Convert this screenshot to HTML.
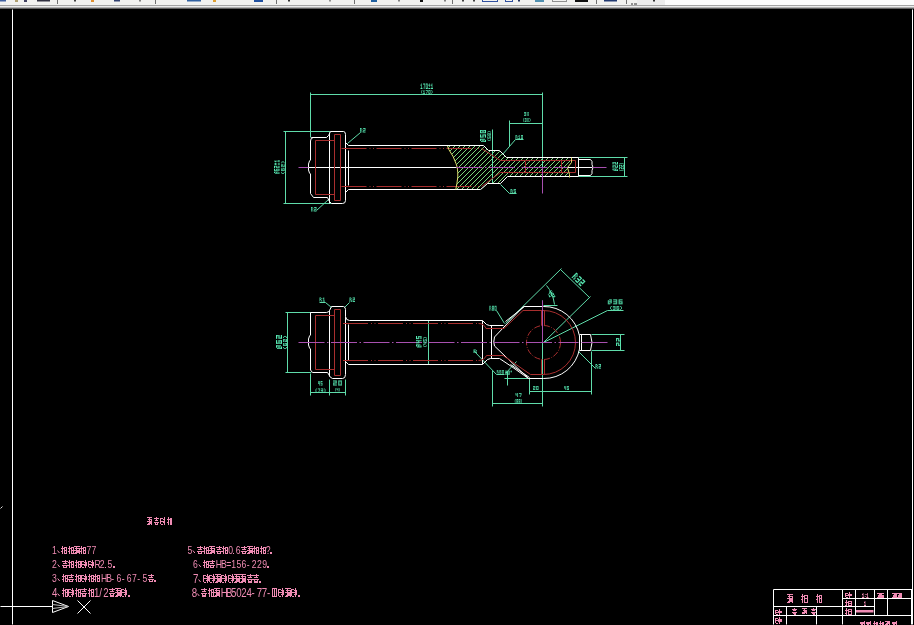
<!DOCTYPE html>
<html><head><meta charset="utf-8"><style>
html,body{margin:0;padding:0;background:#000;width:914px;height:625px;overflow:hidden}
svg{position:absolute;left:0;top:0;display:block;will-change:transform}
text{font-family:"Liberation Sans",sans-serif}
</style></head><body>
<svg width="914" height="625" viewBox="0 0 914 625">
<rect x="0" y="0" width="914" height="625" fill="#000"/>
<line x1="12.5" y1="9.5" x2="12.5" y2="624.5" stroke="#ffffff" stroke-width="1" />
<line x1="912.5" y1="9.5" x2="912.5" y2="624.5" stroke="#ffffff" stroke-width="1" />
<line x1="0.5" y1="606.5" x2="52.5" y2="606.5" stroke="#ffffff" stroke-width="1" />
<polygon points="52.5,600.5 68.5,606.5 52.5,612.5" fill="none" stroke="#ffffff" stroke-width="1" />
<line x1="52.5" y1="604.5" x2="68.5" y2="606.5" stroke="#bbbbbb" stroke-width="1" />
<line x1="52.5" y1="608.5" x2="68.5" y2="606.5" stroke="#bbbbbb" stroke-width="1" />
<line x1="77.5" y1="600.5" x2="90.5" y2="613.5" stroke="#ffffff" stroke-width="1" />
<line x1="90.5" y1="600.5" x2="77.5" y2="613.5" stroke="#ffffff" stroke-width="1" />
<line x1="0.5" y1="508.5" x2="2.5" y2="506.5" stroke="#dddddd" stroke-width="1" />
<defs><clipPath id="hclip"><path d="M447.5,146 L483.5,146 L488.5,151 L499.5,151 L506.5,158 L571.5,158 L571.5,162.5 L567.8,167.5 L569.8,174.5 L570,177 L507.5,177 L500.5,184 L487.5,184 L480.5,190 L455.5,190 Q458.5,178 457.5,167 Q454,156 447.5,146 Z"/></clipPath></defs>
<g clip-path="url(#hclip)" stroke="#7cd87c" stroke-width="1" shape-rendering="crispEdges"><line x1="385.5" y1="195.5" x2="440.5" y2="140.5"/><line x1="390.5" y1="195.5" x2="445.5" y2="140.5"/><line x1="395.5" y1="195.5" x2="450.5" y2="140.5"/><line x1="400.5" y1="195.5" x2="455.5" y2="140.5"/><line x1="405.5" y1="195.5" x2="460.5" y2="140.5"/><line x1="410.5" y1="195.5" x2="465.5" y2="140.5"/><line x1="415.5" y1="195.5" x2="470.5" y2="140.5"/><line x1="420.5" y1="195.5" x2="475.5" y2="140.5"/><line x1="425.5" y1="195.5" x2="480.5" y2="140.5"/><line x1="430.5" y1="195.5" x2="485.5" y2="140.5"/><line x1="435.5" y1="195.5" x2="490.5" y2="140.5"/><line x1="440.5" y1="195.5" x2="495.5" y2="140.5"/><line x1="445.5" y1="195.5" x2="500.5" y2="140.5"/><line x1="450.5" y1="195.5" x2="505.5" y2="140.5"/><line x1="455.5" y1="195.5" x2="510.5" y2="140.5"/><line x1="460.5" y1="195.5" x2="515.5" y2="140.5"/><line x1="465.5" y1="195.5" x2="520.5" y2="140.5"/><line x1="470.5" y1="195.5" x2="525.5" y2="140.5"/><line x1="475.5" y1="195.5" x2="530.5" y2="140.5"/><line x1="480.5" y1="195.5" x2="535.5" y2="140.5"/><line x1="485.5" y1="195.5" x2="540.5" y2="140.5"/><line x1="490.5" y1="195.5" x2="545.5" y2="140.5"/><line x1="495.5" y1="195.5" x2="550.5" y2="140.5"/><line x1="500.5" y1="195.5" x2="555.5" y2="140.5"/><line x1="505.5" y1="195.5" x2="560.5" y2="140.5"/><line x1="510.5" y1="195.5" x2="565.5" y2="140.5"/><line x1="515.5" y1="195.5" x2="570.5" y2="140.5"/><line x1="520.5" y1="195.5" x2="575.5" y2="140.5"/><line x1="525.5" y1="195.5" x2="580.5" y2="140.5"/><line x1="530.5" y1="195.5" x2="585.5" y2="140.5"/><line x1="535.5" y1="195.5" x2="590.5" y2="140.5"/><line x1="540.5" y1="195.5" x2="595.5" y2="140.5"/><line x1="545.5" y1="195.5" x2="600.5" y2="140.5"/><line x1="550.5" y1="195.5" x2="605.5" y2="140.5"/><line x1="555.5" y1="195.5" x2="610.5" y2="140.5"/><line x1="560.5" y1="195.5" x2="615.5" y2="140.5"/><line x1="565.5" y1="195.5" x2="620.5" y2="140.5"/><line x1="570.5" y1="195.5" x2="625.5" y2="140.5"/><line x1="575.5" y1="195.5" x2="630.5" y2="140.5"/></g>
<line x1="310.5" y1="94.5" x2="542.5" y2="94.5" stroke="#5fdcaa" stroke-width="1" />
<line x1="310.5" y1="92.5" x2="310.5" y2="137.5" stroke="#5fdcaa" stroke-width="1" />
<line x1="542.5" y1="92.5" x2="542.5" y2="167.5" stroke="#5fdcaa" stroke-width="1" />
<line x1="283.5" y1="131.5" x2="330.5" y2="131.5" stroke="#5fdcaa" stroke-width="1" />
<line x1="283.5" y1="203.5" x2="331.5" y2="203.5" stroke="#5fdcaa" stroke-width="1" />
<line x1="285.5" y1="131.5" x2="285.5" y2="203.5" stroke="#5fdcaa" stroke-width="1" />
<line x1="492.5" y1="129.5" x2="492.5" y2="183.5" stroke="#5fdcaa" stroke-width="1" />
<line x1="509.5" y1="123.5" x2="542.5" y2="123.5" stroke="#5fdcaa" stroke-width="1" />
<line x1="509.5" y1="120.5" x2="509.5" y2="146.5" stroke="#5fdcaa" stroke-width="1" />
<line x1="578.5" y1="157.5" x2="627.5" y2="157.5" stroke="#5fdcaa" stroke-width="1" />
<line x1="578.5" y1="176.5" x2="627.5" y2="176.5" stroke="#5fdcaa" stroke-width="1" />
<line x1="624.5" y1="157.5" x2="624.5" y2="176.5" stroke="#5fdcaa" stroke-width="1" />
<line x1="347.5" y1="143.5" x2="360.5" y2="132.5" stroke="#5fdcaa" stroke-width="1" />
<g transform="translate(360.00,128.00) scale(0.786,0.900)" fill="#58eab4"><rect x="0" y="0" width="2" height="1"/><rect x="0" y="1" width="1" height="1"/><rect x="2" y="1" width="1" height="1"/><rect x="0" y="2" width="2" height="1"/><rect x="0" y="3" width="1" height="1"/><rect x="2" y="3" width="1" height="1"/><rect x="0" y="4" width="1" height="1"/><rect x="2" y="4" width="1" height="1"/><rect x="4" y="0" width="3" height="1"/><rect x="6" y="1" width="1" height="1"/><rect x="4" y="2" width="3" height="1"/><rect x="4" y="3" width="1" height="1"/><rect x="4" y="4" width="3" height="1"/></g>
<line x1="328.5" y1="199.5" x2="316.5" y2="210.5" stroke="#5fdcaa" stroke-width="1" />
<g transform="translate(311.00,207.00) scale(0.786,0.900)" fill="#58eab4"><rect x="0" y="0" width="2" height="1"/><rect x="0" y="1" width="1" height="1"/><rect x="2" y="1" width="1" height="1"/><rect x="0" y="2" width="2" height="1"/><rect x="0" y="3" width="1" height="1"/><rect x="2" y="3" width="1" height="1"/><rect x="0" y="4" width="1" height="1"/><rect x="2" y="4" width="1" height="1"/><rect x="4" y="0" width="3" height="1"/><rect x="6" y="1" width="1" height="1"/><rect x="4" y="2" width="3" height="1"/><rect x="4" y="3" width="1" height="1"/><rect x="4" y="4" width="3" height="1"/></g>
<line x1="502.5" y1="154.5" x2="515.5" y2="139.5" stroke="#5fdcaa" stroke-width="1" />
<line x1="515.5" y1="139.5" x2="523.5" y2="139.5" stroke="#5fdcaa" stroke-width="1" />
<g transform="translate(515.50,135.00) scale(0.682,0.800)" fill="#58eab4"><rect x="0" y="0" width="2" height="1"/><rect x="0" y="1" width="1" height="1"/><rect x="2" y="1" width="1" height="1"/><rect x="0" y="2" width="2" height="1"/><rect x="0" y="3" width="1" height="1"/><rect x="2" y="3" width="1" height="1"/><rect x="0" y="4" width="1" height="1"/><rect x="2" y="4" width="1" height="1"/><rect x="5" y="0" width="1" height="1"/><rect x="4" y="1" width="2" height="1"/><rect x="5" y="2" width="1" height="1"/><rect x="5" y="3" width="1" height="1"/><rect x="4" y="4" width="3" height="1"/><rect x="8" y="0" width="3" height="1"/><rect x="8" y="1" width="1" height="1"/><rect x="10" y="1" width="1" height="1"/><rect x="8" y="2" width="1" height="1"/><rect x="10" y="2" width="1" height="1"/><rect x="8" y="3" width="1" height="1"/><rect x="10" y="3" width="1" height="1"/><rect x="8" y="4" width="3" height="1"/></g>
<line x1="500.5" y1="184.5" x2="509.5" y2="193.5" stroke="#5fdcaa" stroke-width="1" />
<line x1="509.5" y1="193.5" x2="516.5" y2="193.5" stroke="#5fdcaa" stroke-width="1" />
<g transform="translate(510.50,189.00) scale(0.786,0.800)" fill="#58eab4"><rect x="0" y="0" width="2" height="1"/><rect x="0" y="1" width="1" height="1"/><rect x="2" y="1" width="1" height="1"/><rect x="0" y="2" width="2" height="1"/><rect x="0" y="3" width="1" height="1"/><rect x="2" y="3" width="1" height="1"/><rect x="0" y="4" width="1" height="1"/><rect x="2" y="4" width="1" height="1"/><rect x="4" y="0" width="3" height="1"/><rect x="4" y="1" width="1" height="1"/><rect x="4" y="2" width="3" height="1"/><rect x="6" y="3" width="1" height="1"/><rect x="4" y="4" width="3" height="1"/></g>
<path d="M311.5,137.5 L326.5,137.5 Q329,136 330.5,131.5 L343.5,131.5 Q345.5,131.5 345.5,134.5 L345.5,200.5 Q345.5,203.5 342.5,203.5 L331.5,203.5 Q329,202 327.5,197.5 L313.5,197.5 L310.5,193.5 L310.5,174 L309.5,173 L308.5,170 L308.5,164 L309.5,161 L310.5,160 L310.5,141 Q310.5,137.5 313.5,137.5 Z" fill="none" stroke="#ffffff" stroke-width="1" />
<line x1="329.5" y1="132.5" x2="329.5" y2="203.5" stroke="#ffffff" stroke-width="1" />
<polyline points="345.5,142.5 348.5,145.5 483.5,145.5 488.5,150.5 499.5,150.5 506.5,157.5 578.5,157.5" fill="none" stroke="#ffffff" stroke-width="1" />
<polyline points="345.5,192.5 348.5,189.5 480.5,189.5 487.5,183.5 500.5,183.5 507.5,176.5 578.5,176.5" fill="none" stroke="#ffffff" stroke-width="1" />
<line x1="348.5" y1="150.5" x2="348.5" y2="185.5" stroke="#ffffff" stroke-width="1" />
<line x1="308.5" y1="167.5" x2="456.5" y2="167.5" stroke="#ffffff" stroke-width="1" />
<line x1="567.5" y1="167.5" x2="592.5" y2="167.5" stroke="#ffffff" stroke-width="1" />
<path d="M578.5,157.5 L578.5,176.5 M578.5,159.5 L590.5,159.5 L592,161.5 L592,164.5 L593,167.5 L592,170.5 L592,173.5 L590.5,175.5 L578.5,175.5" fill="none" stroke="#ffffff" stroke-width="1" />
<polyline points="334.5,140.5 315.5,140.5 315.5,194.5 334.5,194.5" fill="none" stroke="#a82e2e" stroke-width="1" />
<polygon points="334.5,134.5 340.5,134.5 340.5,200.5 334.5,200.5" fill="none" stroke="#a82e2e" stroke-width="1" />
<line x1="341.5" y1="148.5" x2="481.5" y2="148.5" stroke="#a82e2e" stroke-width="1" stroke-dasharray="25 3 1 2.5 1 2.5"/>
<line x1="341.5" y1="186.5" x2="481.5" y2="186.5" stroke="#a82e2e" stroke-width="1" stroke-dasharray="25 3 1 2.5 1 2.5"/>
<polyline points="481.5,148.5 500.5,160.5 575.5,160.5 575.5,172.5 500.5,172.5 481.5,186.5" fill="none" stroke="#a82e2e" stroke-width="1" />
<line x1="561.5" y1="160.5" x2="561.5" y2="172.5" stroke="#a82e2e" stroke-width="1" />
<line x1="525.5" y1="161.5" x2="525.5" y2="172.5" stroke="#a82e2e" stroke-width="1" />
<path d="M447.5,146 L448.8,149.5 Q454,157 456,163.5 Q458,168 457.8,177 Q457,184 455.8,189.5" fill="none" stroke="#e0e070" stroke-width="1" />
<polyline points="571.5,157.5 571.5,162.5 567.5,167.5 569.5,174.5 569.5,177.5" fill="none" stroke="#e0e070" stroke-width="1" />
<line x1="298.5" y1="167.5" x2="308.5" y2="167.5" stroke="#a850b0" stroke-width="1" />
<line x1="456.5" y1="167.5" x2="567.5" y2="167.5" stroke="#a850b0" stroke-width="1" stroke-dasharray="26 2.5 1.5 2.5"/>
<line x1="592.5" y1="167.5" x2="606.5" y2="167.5" stroke="#a850b0" stroke-width="1" />
<line x1="542.5" y1="167.5" x2="542.5" y2="193.5" stroke="#a850b0" stroke-width="1" />
<g transform="translate(420.50,83.50) scale(0.658,1.100)" fill="#58eab4"><rect x="1" y="0" width="1" height="1"/><rect x="0" y="1" width="2" height="1"/><rect x="1" y="2" width="1" height="1"/><rect x="1" y="3" width="1" height="1"/><rect x="0" y="4" width="3" height="1"/><rect x="4" y="0" width="3" height="1"/><rect x="6" y="1" width="1" height="1"/><rect x="6" y="2" width="1" height="1"/><rect x="5" y="3" width="1" height="1"/><rect x="5" y="4" width="1" height="1"/><rect x="8" y="0" width="3" height="1"/><rect x="8" y="1" width="1" height="1"/><rect x="10" y="1" width="1" height="1"/><rect x="8" y="2" width="1" height="1"/><rect x="10" y="2" width="1" height="1"/><rect x="8" y="3" width="1" height="1"/><rect x="10" y="3" width="1" height="1"/><rect x="8" y="4" width="3" height="1"/><rect x="13" y="0" width="1" height="1"/><rect x="12" y="1" width="3" height="1"/><rect x="13" y="2" width="1" height="1"/><rect x="12" y="4" width="3" height="1"/><rect x="17" y="0" width="1" height="1"/><rect x="16" y="1" width="2" height="1"/><rect x="17" y="2" width="1" height="1"/><rect x="17" y="3" width="1" height="1"/><rect x="16" y="4" width="3" height="1"/></g>
<g transform="translate(421.00,90.00) scale(0.676,0.760)" fill="#58eab4"><rect x="1" y="0" width="1" height="1"/><rect x="0" y="1" width="1" height="1"/><rect x="0" y="2" width="1" height="1"/><rect x="0" y="3" width="1" height="1"/><rect x="1" y="4" width="1" height="1"/><rect x="4" y="0" width="1" height="1"/><rect x="3" y="1" width="2" height="1"/><rect x="4" y="2" width="1" height="1"/><rect x="4" y="3" width="1" height="1"/><rect x="3" y="4" width="3" height="1"/><rect x="7" y="0" width="3" height="1"/><rect x="9" y="1" width="1" height="1"/><rect x="9" y="2" width="1" height="1"/><rect x="8" y="3" width="1" height="1"/><rect x="8" y="4" width="1" height="1"/><rect x="11" y="0" width="3" height="1"/><rect x="11" y="1" width="1" height="1"/><rect x="13" y="1" width="1" height="1"/><rect x="11" y="2" width="1" height="1"/><rect x="13" y="2" width="1" height="1"/><rect x="11" y="3" width="1" height="1"/><rect x="13" y="3" width="1" height="1"/><rect x="11" y="4" width="3" height="1"/><rect x="15" y="0" width="1" height="1"/><rect x="16" y="1" width="1" height="1"/><rect x="16" y="2" width="1" height="1"/><rect x="16" y="3" width="1" height="1"/><rect x="15" y="4" width="1" height="1"/></g>
<g transform="translate(274.00,173.80) rotate(-90) scale(0.726,1.100)" fill="#58eab4"><rect x="1" y="0" width="2" height="1"/><rect x="0" y="1" width="1" height="1"/><rect x="2" y="1" width="1" height="1"/><rect x="0" y="2" width="3" height="1"/><rect x="0" y="3" width="1" height="1"/><rect x="2" y="3" width="1" height="1"/><rect x="0" y="4" width="2" height="1"/><rect x="4" y="0" width="3" height="1"/><rect x="4" y="1" width="1" height="1"/><rect x="4" y="2" width="3" height="1"/><rect x="4" y="3" width="1" height="1"/><rect x="6" y="3" width="1" height="1"/><rect x="4" y="4" width="3" height="1"/><rect x="8" y="0" width="3" height="1"/><rect x="10" y="1" width="1" height="1"/><rect x="8" y="2" width="3" height="1"/><rect x="8" y="3" width="1" height="1"/><rect x="8" y="4" width="3" height="1"/><rect x="13" y="0" width="1" height="1"/><rect x="12" y="1" width="3" height="1"/><rect x="13" y="2" width="1" height="1"/><rect x="12" y="4" width="3" height="1"/><rect x="17" y="0" width="1" height="1"/><rect x="16" y="1" width="2" height="1"/><rect x="17" y="2" width="1" height="1"/><rect x="17" y="3" width="1" height="1"/><rect x="16" y="4" width="3" height="1"/></g>
<g transform="translate(281.00,174.00) rotate(-90) scale(0.969,0.720)" fill="#58eab4"><rect x="1" y="0" width="1" height="1"/><rect x="0" y="1" width="1" height="1"/><rect x="0" y="2" width="1" height="1"/><rect x="0" y="3" width="1" height="1"/><rect x="1" y="4" width="1" height="1"/><rect x="3" y="0" width="3" height="1"/><rect x="3" y="1" width="1" height="1"/><rect x="3" y="2" width="3" height="1"/><rect x="3" y="3" width="1" height="1"/><rect x="5" y="3" width="1" height="1"/><rect x="3" y="4" width="3" height="1"/><rect x="7" y="0" width="3" height="1"/><rect x="9" y="1" width="1" height="1"/><rect x="7" y="2" width="3" height="1"/><rect x="7" y="3" width="1" height="1"/><rect x="7" y="4" width="3" height="1"/><rect x="11" y="0" width="1" height="1"/><rect x="12" y="1" width="1" height="1"/><rect x="12" y="2" width="1" height="1"/><rect x="12" y="3" width="1" height="1"/><rect x="11" y="4" width="1" height="1"/></g>
<g transform="translate(480.00,142.00) rotate(-90) scale(1.091,1.200)" fill="#58eab4"><rect x="1" y="0" width="2" height="1"/><rect x="0" y="1" width="1" height="1"/><rect x="2" y="1" width="1" height="1"/><rect x="0" y="2" width="3" height="1"/><rect x="0" y="3" width="1" height="1"/><rect x="2" y="3" width="1" height="1"/><rect x="0" y="4" width="2" height="1"/><rect x="4" y="0" width="3" height="1"/><rect x="4" y="1" width="1" height="1"/><rect x="4" y="2" width="3" height="1"/><rect x="6" y="3" width="1" height="1"/><rect x="4" y="4" width="3" height="1"/><rect x="8" y="0" width="3" height="1"/><rect x="8" y="1" width="1" height="1"/><rect x="10" y="1" width="1" height="1"/><rect x="8" y="2" width="3" height="1"/><rect x="8" y="3" width="1" height="1"/><rect x="10" y="3" width="1" height="1"/><rect x="8" y="4" width="3" height="1"/></g>
<g transform="translate(487.40,141.00) rotate(-90) scale(0.769,0.720)" fill="#58eab4"><rect x="1" y="0" width="1" height="1"/><rect x="0" y="1" width="1" height="1"/><rect x="0" y="2" width="1" height="1"/><rect x="0" y="3" width="1" height="1"/><rect x="1" y="4" width="1" height="1"/><rect x="3" y="0" width="3" height="1"/><rect x="3" y="1" width="1" height="1"/><rect x="3" y="2" width="3" height="1"/><rect x="5" y="3" width="1" height="1"/><rect x="3" y="4" width="3" height="1"/><rect x="7" y="0" width="3" height="1"/><rect x="7" y="1" width="1" height="1"/><rect x="9" y="1" width="1" height="1"/><rect x="7" y="2" width="3" height="1"/><rect x="7" y="3" width="1" height="1"/><rect x="9" y="3" width="1" height="1"/><rect x="7" y="4" width="3" height="1"/><rect x="11" y="0" width="1" height="1"/><rect x="12" y="1" width="1" height="1"/><rect x="12" y="2" width="1" height="1"/><rect x="12" y="3" width="1" height="1"/><rect x="11" y="4" width="1" height="1"/></g>
<g transform="translate(524.00,112.00) scale(0.714,0.760)" fill="#58eab4"><rect x="0" y="0" width="3" height="1"/><rect x="2" y="1" width="1" height="1"/><rect x="0" y="2" width="3" height="1"/><rect x="2" y="3" width="1" height="1"/><rect x="0" y="4" width="3" height="1"/><rect x="4" y="0" width="1" height="1"/><rect x="6" y="0" width="1" height="1"/><rect x="4" y="1" width="1" height="1"/><rect x="6" y="1" width="1" height="1"/><rect x="5" y="2" width="1" height="1"/><rect x="4" y="3" width="1" height="1"/><rect x="6" y="3" width="1" height="1"/><rect x="4" y="4" width="1" height="1"/><rect x="6" y="4" width="1" height="1"/></g>
<g transform="translate(523.00,118.00) scale(0.577,0.800)" fill="#58eab4"><rect x="1" y="0" width="1" height="1"/><rect x="0" y="1" width="1" height="1"/><rect x="0" y="2" width="1" height="1"/><rect x="0" y="3" width="1" height="1"/><rect x="1" y="4" width="1" height="1"/><rect x="3" y="0" width="3" height="1"/><rect x="5" y="1" width="1" height="1"/><rect x="3" y="2" width="3" height="1"/><rect x="5" y="3" width="1" height="1"/><rect x="3" y="4" width="3" height="1"/><rect x="7" y="0" width="1" height="1"/><rect x="9" y="0" width="1" height="1"/><rect x="7" y="1" width="1" height="1"/><rect x="9" y="1" width="1" height="1"/><rect x="8" y="2" width="1" height="1"/><rect x="7" y="3" width="1" height="1"/><rect x="9" y="3" width="1" height="1"/><rect x="7" y="4" width="1" height="1"/><rect x="9" y="4" width="1" height="1"/><rect x="11" y="0" width="1" height="1"/><rect x="12" y="1" width="1" height="1"/><rect x="12" y="2" width="1" height="1"/><rect x="12" y="3" width="1" height="1"/><rect x="11" y="4" width="1" height="1"/></g>
<g transform="translate(612.50,171.00) rotate(-90) scale(0.818,1.100)" fill="#58eab4"><rect x="1" y="0" width="2" height="1"/><rect x="0" y="1" width="1" height="1"/><rect x="2" y="1" width="1" height="1"/><rect x="0" y="2" width="3" height="1"/><rect x="0" y="3" width="1" height="1"/><rect x="2" y="3" width="1" height="1"/><rect x="0" y="4" width="2" height="1"/><rect x="4" y="0" width="3" height="1"/><rect x="6" y="1" width="1" height="1"/><rect x="4" y="2" width="3" height="1"/><rect x="4" y="3" width="1" height="1"/><rect x="4" y="4" width="3" height="1"/><rect x="8" y="0" width="3" height="1"/><rect x="10" y="1" width="1" height="1"/><rect x="8" y="2" width="3" height="1"/><rect x="8" y="3" width="1" height="1"/><rect x="8" y="4" width="3" height="1"/></g>
<g transform="translate(619.00,171.00) rotate(-90) scale(0.615,0.960)" fill="#58eab4"><rect x="1" y="0" width="1" height="1"/><rect x="0" y="1" width="1" height="1"/><rect x="0" y="2" width="1" height="1"/><rect x="0" y="3" width="1" height="1"/><rect x="1" y="4" width="1" height="1"/><rect x="3" y="0" width="3" height="1"/><rect x="5" y="1" width="1" height="1"/><rect x="3" y="2" width="3" height="1"/><rect x="3" y="3" width="1" height="1"/><rect x="3" y="4" width="3" height="1"/><rect x="7" y="0" width="3" height="1"/><rect x="9" y="1" width="1" height="1"/><rect x="7" y="2" width="3" height="1"/><rect x="7" y="3" width="1" height="1"/><rect x="7" y="4" width="3" height="1"/><rect x="11" y="0" width="1" height="1"/><rect x="12" y="1" width="1" height="1"/><rect x="12" y="2" width="1" height="1"/><rect x="12" y="3" width="1" height="1"/><rect x="11" y="4" width="1" height="1"/></g>
<line x1="285.5" y1="312.5" x2="315.5" y2="312.5" stroke="#5fdcaa" stroke-width="1" />
<line x1="285.5" y1="372.5" x2="311.5" y2="372.5" stroke="#5fdcaa" stroke-width="1" />
<line x1="287.5" y1="312.5" x2="287.5" y2="372.5" stroke="#5fdcaa" stroke-width="1" />
<line x1="310.5" y1="373.5" x2="310.5" y2="395.5" stroke="#5fdcaa" stroke-width="1" />
<line x1="329.5" y1="379.5" x2="329.5" y2="395.5" stroke="#5fdcaa" stroke-width="1" />
<line x1="345.5" y1="379.5" x2="345.5" y2="395.5" stroke="#5fdcaa" stroke-width="1" />
<line x1="310.5" y1="392.5" x2="345.5" y2="392.5" stroke="#5fdcaa" stroke-width="1" />
<line x1="428.5" y1="320.5" x2="428.5" y2="364.5" stroke="#5fdcaa" stroke-width="1" />
<line x1="331.5" y1="307.5" x2="325.5" y2="302.5" stroke="#5fdcaa" stroke-width="1" />
<line x1="319.5" y1="302.5" x2="325.5" y2="302.5" stroke="#5fdcaa" stroke-width="1" />
<line x1="344.5" y1="307.5" x2="349.5" y2="302.5" stroke="#5fdcaa" stroke-width="1" />
<line x1="505.5" y1="323.5" x2="561.5" y2="268.5" stroke="#5fdcaa" stroke-width="1" />
<line x1="560.5" y1="269.5" x2="589.5" y2="297.5" stroke="#5fdcaa" stroke-width="1" />
<line x1="590.5" y1="296.5" x2="543.5" y2="342.5" stroke="#5fdcaa" stroke-width="1" />
<path d="M546.5,285.5 Q553,293 554.5,304.5" fill="none" stroke="#5fdcaa" stroke-width="1" />
<line x1="543.5" y1="305.5" x2="557.5" y2="305.5" stroke="#5fdcaa" stroke-width="1" />
<line x1="543.5" y1="342.5" x2="607.5" y2="310.5" stroke="#5fdcaa" stroke-width="1" />
<line x1="607.5" y1="310.5" x2="623.5" y2="310.5" stroke="#5fdcaa" stroke-width="1" />
<line x1="542.5" y1="300.5" x2="542.5" y2="406.5" stroke="#5fdcaa" stroke-width="1" />
<line x1="591.5" y1="334.5" x2="624.5" y2="334.5" stroke="#5fdcaa" stroke-width="1" />
<line x1="591.5" y1="350.5" x2="624.5" y2="350.5" stroke="#5fdcaa" stroke-width="1" />
<line x1="620.5" y1="334.5" x2="620.5" y2="350.5" stroke="#5fdcaa" stroke-width="1" />
<line x1="591.5" y1="351.5" x2="591.5" y2="394.5" stroke="#5fdcaa" stroke-width="1" />
<line x1="578.5" y1="351.5" x2="595.5" y2="368.5" stroke="#5fdcaa" stroke-width="1" />
<line x1="577.5" y1="350.5" x2="592.5" y2="367.5" stroke="#5fdcaa" stroke-width="1" opacity="0"/>
<line x1="529.5" y1="378.5" x2="529.5" y2="394.5" stroke="#5fdcaa" stroke-width="1" />
<line x1="529.5" y1="391.5" x2="591.5" y2="391.5" stroke="#5fdcaa" stroke-width="1" />
<line x1="492.5" y1="370.5" x2="492.5" y2="406.5" stroke="#5fdcaa" stroke-width="1" />
<line x1="492.5" y1="403.5" x2="542.5" y2="403.5" stroke="#5fdcaa" stroke-width="1" />
<g transform="translate(514.80,399.00) scale(0.554,0.900)" fill="#58eab4"><rect x="1" y="0" width="1" height="1"/><rect x="0" y="1" width="1" height="1"/><rect x="0" y="2" width="1" height="1"/><rect x="0" y="3" width="1" height="1"/><rect x="1" y="4" width="1" height="1"/><rect x="3" y="0" width="3" height="1"/><rect x="3" y="1" width="1" height="1"/><rect x="5" y="1" width="1" height="1"/><rect x="3" y="2" width="3" height="1"/><rect x="3" y="3" width="1" height="1"/><rect x="5" y="3" width="1" height="1"/><rect x="3" y="4" width="3" height="1"/><rect x="7" y="0" width="3" height="1"/><rect x="7" y="1" width="1" height="1"/><rect x="9" y="1" width="1" height="1"/><rect x="7" y="2" width="3" height="1"/><rect x="7" y="3" width="1" height="1"/><rect x="9" y="3" width="1" height="1"/><rect x="7" y="4" width="3" height="1"/><rect x="11" y="0" width="1" height="1"/><rect x="12" y="1" width="1" height="1"/><rect x="12" y="2" width="1" height="1"/><rect x="12" y="3" width="1" height="1"/><rect x="11" y="4" width="1" height="1"/></g>
<line x1="504.5" y1="378.5" x2="529.5" y2="378.5" stroke="#5fdcaa" stroke-width="1" />
<line x1="507.5" y1="371.5" x2="507.5" y2="385.5" stroke="#5fdcaa" stroke-width="1" />
<line x1="516.5" y1="361.5" x2="505.5" y2="373.5" stroke="#5fdcaa" stroke-width="1" />
<line x1="474.5" y1="351.5" x2="496.5" y2="374.5" stroke="#5fdcaa" stroke-width="1" />
<line x1="496.5" y1="374.5" x2="504.5" y2="374.5" stroke="#5fdcaa" stroke-width="1" />
<g transform="translate(473.50,349.50) scale(1.167,0.700)" fill="#58eab4"><rect x="0" y="0" width="2" height="1"/><rect x="0" y="1" width="1" height="1"/><rect x="2" y="1" width="1" height="1"/><rect x="0" y="2" width="2" height="1"/><rect x="0" y="3" width="1" height="1"/><rect x="2" y="3" width="1" height="1"/><rect x="0" y="4" width="1" height="1"/><rect x="2" y="4" width="1" height="1"/></g>
<line x1="496.5" y1="310.5" x2="504.5" y2="323.5" stroke="#5fdcaa" stroke-width="1" />
<g transform="translate(489.40,305.80) scale(0.645,0.960)" fill="#58eab4"><rect x="0" y="0" width="2" height="1"/><rect x="0" y="1" width="1" height="1"/><rect x="2" y="1" width="1" height="1"/><rect x="0" y="2" width="2" height="1"/><rect x="0" y="3" width="1" height="1"/><rect x="2" y="3" width="1" height="1"/><rect x="0" y="4" width="1" height="1"/><rect x="2" y="4" width="1" height="1"/><rect x="4" y="0" width="3" height="1"/><rect x="4" y="1" width="1" height="1"/><rect x="6" y="1" width="1" height="1"/><rect x="4" y="2" width="3" height="1"/><rect x="4" y="3" width="1" height="1"/><rect x="6" y="3" width="1" height="1"/><rect x="4" y="4" width="3" height="1"/><rect x="8" y="0" width="3" height="1"/><rect x="8" y="1" width="1" height="1"/><rect x="10" y="1" width="1" height="1"/><rect x="8" y="2" width="1" height="1"/><rect x="10" y="2" width="1" height="1"/><rect x="8" y="3" width="1" height="1"/><rect x="10" y="3" width="1" height="1"/><rect x="8" y="4" width="3" height="1"/></g>
<line x1="474.5" y1="352.5" x2="494.5" y2="372.5" stroke="#5fdcaa" stroke-width="1" opacity="0"/>
<path d="M310.5,312.5 L326.5,312.5 Q329,312 329.5,310.5 L331.5,306.5 L343.5,306.5 Q345.5,307 345.5,309.5 L345.5,316.5 Q346,320.5 349.5,320.5" fill="none" stroke="#ffffff" stroke-width="1" />
<path d="M345.5,316.5 L345.5,374.5 Q345.5,378.5 342.5,378.5 L332.5,378.5 Q330,378 328.5,374 L327.5,372.5 L312.5,372.5 L310.5,370 L310.5,349 L309.5,348 L308.5,345 L308.5,339 L309.5,336 L310.5,335 L310.5,312.5" fill="none" stroke="#ffffff" stroke-width="1" />
<line x1="329.5" y1="310.5" x2="329.5" y2="376.5" stroke="#ffffff" stroke-width="1" />
<line x1="348.5" y1="324.5" x2="348.5" y2="360.5" stroke="#ffffff" stroke-width="1" />
<polyline points="345.5,361.5 348.5,364.5 482.5,364.5" fill="none" stroke="#ffffff" stroke-width="1" />
<line x1="349.5" y1="320.5" x2="482.5" y2="320.5" stroke="#ffffff" stroke-width="1" />
<polyline points="482.5,320.5 486.5,324.5 489.5,325.5 503.5,325.5" fill="none" stroke="#ffffff" stroke-width="1" />
<polyline points="482.5,364.5 487.5,359.5 490.5,358.5 499.5,358.5 511.5,366.5" fill="none" stroke="#ffffff" stroke-width="1" />
<line x1="482.5" y1="320.5" x2="482.5" y2="364.5" stroke="#ffffff" stroke-width="1" />
<line x1="491.5" y1="325.5" x2="491.5" y2="358.5" stroke="#ffffff" stroke-width="1" />
<path d="M523.5,306.5 L543.5,306.5 A36,36 0 0 1 579.5,336 L579.5,349 A36,36 0 0 1 543.5,378.5 L528.5,378.5 L494.5,346 Q493,342.5 494.5,337 Z" fill="none" stroke="#ffffff" stroke-width="1" />
<line x1="511.5" y1="366.5" x2="528.5" y2="378.5" stroke="#ffffff" stroke-width="1" />
<line x1="510.5" y1="364.5" x2="529.5" y2="377.5" stroke="#ffffff" stroke-width="1" />
<line x1="505.5" y1="321.5" x2="524.5" y2="306.5" stroke="#ffffff" stroke-width="1" />
<path d="M581.5,334.5 L581.5,350.5 M579.5,334.5 L590.5,334.5 Q593.5,342.5 590.5,350.5 L579.5,350.5" fill="none" stroke="#ffffff" stroke-width="1" />
<polyline points="334.5,315.5 315.5,315.5 315.5,369.5 334.5,369.5" fill="none" stroke="#a82e2e" stroke-width="1" />
<polygon points="334.5,309.5 340.5,309.5 340.5,375.5 334.5,375.5" fill="none" stroke="#a82e2e" stroke-width="1" />
<line x1="341.5" y1="323.5" x2="478.5" y2="323.5" stroke="#a82e2e" stroke-width="1" stroke-dasharray="25 3 1 2.5 1 2.5" stroke-dashoffset="-1.5"/>
<line x1="341.5" y1="360.5" x2="478.5" y2="360.5" stroke="#a82e2e" stroke-width="1" stroke-dasharray="25 3 1 2.5 1 2.5" stroke-dashoffset="-1.5"/>
<path d="M478.5,323.5 Q484,323.5 486,328.5 L504,328.5 L523,310.5 L543,310.5 A32,32 0 0 1 575.5,342.5 A32,32 0 0 1 543,374.5 L530.5,374.5 L503,355.5 L486.5,355.5 Q484,360.5 478.5,360.5" fill="none" stroke="#a82e2e" stroke-width="1" />
<line x1="541.5" y1="310.5" x2="541.5" y2="325.5" stroke="#a82e2e" stroke-width="1" />
<line x1="544.5" y1="310.5" x2="544.5" y2="325.5" stroke="#a82e2e" stroke-width="1" />
<line x1="541.5" y1="359.5" x2="541.5" y2="374.5" stroke="#a82e2e" stroke-width="1" />
<line x1="544.5" y1="359.5" x2="544.5" y2="374.5" stroke="#a82e2e" stroke-width="1" />
<circle cx="543.5" cy="342.5" r="17" fill="none" stroke="#a82e2e" stroke-width="1" stroke-dasharray="6 1.5 1 1.5"/>
<line x1="298.5" y1="342.5" x2="578.5" y2="342.5" stroke="#a850b0" stroke-width="1" stroke-dasharray="26 2.5 1.5 2.5"/>
<line x1="581.5" y1="342.5" x2="607.5" y2="342.5" stroke="#a850b0" stroke-width="1" />
<line x1="542.5" y1="300.5" x2="542.5" y2="342.5" stroke="#a850b0" stroke-width="1" />
<g transform="translate(276.00,349.00) rotate(-90) scale(1.273,1.200)" fill="#58eab4"><rect x="1" y="0" width="2" height="1"/><rect x="0" y="1" width="1" height="1"/><rect x="2" y="1" width="1" height="1"/><rect x="0" y="2" width="3" height="1"/><rect x="0" y="3" width="1" height="1"/><rect x="2" y="3" width="1" height="1"/><rect x="0" y="4" width="2" height="1"/><rect x="4" y="0" width="3" height="1"/><rect x="4" y="1" width="1" height="1"/><rect x="4" y="2" width="3" height="1"/><rect x="4" y="3" width="1" height="1"/><rect x="6" y="3" width="1" height="1"/><rect x="4" y="4" width="3" height="1"/><rect x="8" y="0" width="3" height="1"/><rect x="10" y="1" width="1" height="1"/><rect x="8" y="2" width="3" height="1"/><rect x="8" y="3" width="1" height="1"/><rect x="8" y="4" width="3" height="1"/></g>
<g transform="translate(283.00,349.00) rotate(-90) scale(1.000,0.800)" fill="#58eab4"><rect x="1" y="0" width="1" height="1"/><rect x="0" y="1" width="1" height="1"/><rect x="0" y="2" width="1" height="1"/><rect x="0" y="3" width="1" height="1"/><rect x="1" y="4" width="1" height="1"/><rect x="3" y="0" width="3" height="1"/><rect x="3" y="1" width="1" height="1"/><rect x="3" y="2" width="3" height="1"/><rect x="3" y="3" width="1" height="1"/><rect x="5" y="3" width="1" height="1"/><rect x="3" y="4" width="3" height="1"/><rect x="7" y="0" width="3" height="1"/><rect x="9" y="1" width="1" height="1"/><rect x="7" y="2" width="3" height="1"/><rect x="7" y="3" width="1" height="1"/><rect x="7" y="4" width="3" height="1"/><rect x="11" y="0" width="1" height="1"/><rect x="12" y="1" width="1" height="1"/><rect x="12" y="2" width="1" height="1"/><rect x="12" y="3" width="1" height="1"/><rect x="11" y="4" width="1" height="1"/></g>
<g transform="translate(416.00,347.50) rotate(-90) scale(1.045,1.100)" fill="#58eab4"><rect x="1" y="0" width="2" height="1"/><rect x="0" y="1" width="1" height="1"/><rect x="2" y="1" width="1" height="1"/><rect x="0" y="2" width="3" height="1"/><rect x="0" y="3" width="1" height="1"/><rect x="2" y="3" width="1" height="1"/><rect x="0" y="4" width="2" height="1"/><rect x="4" y="0" width="1" height="1"/><rect x="6" y="0" width="1" height="1"/><rect x="4" y="1" width="1" height="1"/><rect x="6" y="1" width="1" height="1"/><rect x="4" y="2" width="3" height="1"/><rect x="6" y="3" width="1" height="1"/><rect x="6" y="4" width="1" height="1"/><rect x="8" y="0" width="3" height="1"/><rect x="8" y="1" width="1" height="1"/><rect x="8" y="2" width="3" height="1"/><rect x="10" y="3" width="1" height="1"/><rect x="8" y="4" width="3" height="1"/></g>
<g transform="translate(423.00,347.00) rotate(-90) scale(0.769,0.800)" fill="#58eab4"><rect x="1" y="0" width="1" height="1"/><rect x="0" y="1" width="1" height="1"/><rect x="0" y="2" width="1" height="1"/><rect x="0" y="3" width="1" height="1"/><rect x="1" y="4" width="1" height="1"/><rect x="3" y="0" width="1" height="1"/><rect x="5" y="0" width="1" height="1"/><rect x="3" y="1" width="1" height="1"/><rect x="5" y="1" width="1" height="1"/><rect x="3" y="2" width="3" height="1"/><rect x="5" y="3" width="1" height="1"/><rect x="5" y="4" width="1" height="1"/><rect x="7" y="0" width="3" height="1"/><rect x="7" y="1" width="1" height="1"/><rect x="7" y="2" width="3" height="1"/><rect x="9" y="3" width="1" height="1"/><rect x="7" y="4" width="3" height="1"/><rect x="11" y="0" width="1" height="1"/><rect x="12" y="1" width="1" height="1"/><rect x="12" y="2" width="1" height="1"/><rect x="12" y="3" width="1" height="1"/><rect x="11" y="4" width="1" height="1"/></g>
<g transform="translate(319.50,297.50) scale(0.786,0.800)" fill="#58eab4"><rect x="0" y="0" width="2" height="1"/><rect x="0" y="1" width="1" height="1"/><rect x="2" y="1" width="1" height="1"/><rect x="0" y="2" width="2" height="1"/><rect x="0" y="3" width="1" height="1"/><rect x="2" y="3" width="1" height="1"/><rect x="0" y="4" width="1" height="1"/><rect x="2" y="4" width="1" height="1"/><rect x="5" y="0" width="1" height="1"/><rect x="4" y="1" width="2" height="1"/><rect x="5" y="2" width="1" height="1"/><rect x="5" y="3" width="1" height="1"/><rect x="4" y="4" width="3" height="1"/></g>
<g transform="translate(349.50,297.50) scale(0.786,0.900)" fill="#58eab4"><rect x="0" y="0" width="2" height="1"/><rect x="0" y="1" width="1" height="1"/><rect x="2" y="1" width="1" height="1"/><rect x="0" y="2" width="2" height="1"/><rect x="0" y="3" width="1" height="1"/><rect x="2" y="3" width="1" height="1"/><rect x="0" y="4" width="1" height="1"/><rect x="2" y="4" width="1" height="1"/><rect x="4" y="0" width="3" height="1"/><rect x="6" y="1" width="1" height="1"/><rect x="4" y="2" width="3" height="1"/><rect x="4" y="3" width="1" height="1"/><rect x="4" y="4" width="3" height="1"/></g>
<g transform="translate(318.00,381.00) scale(0.643,0.900)" fill="#58eab4"><rect x="0" y="0" width="1" height="1"/><rect x="2" y="0" width="1" height="1"/><rect x="0" y="1" width="1" height="1"/><rect x="2" y="1" width="1" height="1"/><rect x="0" y="2" width="3" height="1"/><rect x="2" y="3" width="1" height="1"/><rect x="2" y="4" width="1" height="1"/><rect x="4" y="0" width="3" height="1"/><rect x="4" y="1" width="1" height="1"/><rect x="4" y="2" width="3" height="1"/><rect x="6" y="3" width="1" height="1"/><rect x="4" y="4" width="3" height="1"/></g>
<g transform="translate(315.50,388.50) scale(0.769,0.800)" fill="#58eab4"><rect x="1" y="0" width="1" height="1"/><rect x="0" y="1" width="1" height="1"/><rect x="0" y="2" width="1" height="1"/><rect x="0" y="3" width="1" height="1"/><rect x="1" y="4" width="1" height="1"/><rect x="3" y="0" width="3" height="1"/><rect x="5" y="1" width="1" height="1"/><rect x="5" y="2" width="1" height="1"/><rect x="4" y="3" width="1" height="1"/><rect x="4" y="4" width="1" height="1"/><rect x="7" y="0" width="3" height="1"/><rect x="9" y="1" width="1" height="1"/><rect x="7" y="2" width="3" height="1"/><rect x="9" y="3" width="1" height="1"/><rect x="7" y="4" width="3" height="1"/><rect x="11" y="0" width="1" height="1"/><rect x="12" y="1" width="1" height="1"/><rect x="12" y="2" width="1" height="1"/><rect x="12" y="3" width="1" height="1"/><rect x="11" y="4" width="1" height="1"/></g>
<g transform="translate(333.00,380.50) scale(1.286,1.000)" fill="#58eab4"><rect x="0" y="0" width="3" height="1"/><rect x="2" y="1" width="1" height="1"/><rect x="0" y="2" width="3" height="1"/><rect x="0" y="3" width="1" height="1"/><rect x="0" y="4" width="3" height="1"/><rect x="4" y="0" width="3" height="1"/><rect x="4" y="1" width="1" height="1"/><rect x="6" y="1" width="1" height="1"/><rect x="4" y="2" width="1" height="1"/><rect x="6" y="2" width="1" height="1"/><rect x="4" y="3" width="1" height="1"/><rect x="6" y="3" width="1" height="1"/><rect x="4" y="4" width="3" height="1"/></g>
<g transform="translate(335.00,388.00) scale(0.556,0.700)" fill="#58eab4"><rect x="1" y="0" width="1" height="1"/><rect x="0" y="1" width="1" height="1"/><rect x="0" y="2" width="1" height="1"/><rect x="0" y="3" width="1" height="1"/><rect x="1" y="4" width="1" height="1"/><rect x="3" y="0" width="1" height="1"/><rect x="5" y="0" width="1" height="1"/><rect x="3" y="1" width="1" height="1"/><rect x="5" y="1" width="1" height="1"/><rect x="3" y="2" width="3" height="1"/><rect x="5" y="3" width="1" height="1"/><rect x="5" y="4" width="1" height="1"/><rect x="7" y="0" width="1" height="1"/><rect x="8" y="1" width="1" height="1"/><rect x="8" y="2" width="1" height="1"/><rect x="8" y="3" width="1" height="1"/><rect x="7" y="4" width="1" height="1"/></g>
<g transform="translate(578.50,279.50) rotate(45) translate(-6.50,-3.50) scale(1.182,1.400)" fill="#58eab4"><rect x="0" y="0" width="2" height="1"/><rect x="0" y="1" width="1" height="1"/><rect x="2" y="1" width="1" height="1"/><rect x="0" y="2" width="2" height="1"/><rect x="0" y="3" width="1" height="1"/><rect x="2" y="3" width="1" height="1"/><rect x="0" y="4" width="1" height="1"/><rect x="2" y="4" width="1" height="1"/><rect x="4" y="0" width="3" height="1"/><rect x="6" y="1" width="1" height="1"/><rect x="4" y="2" width="3" height="1"/><rect x="6" y="3" width="1" height="1"/><rect x="4" y="4" width="3" height="1"/><rect x="8" y="0" width="3" height="1"/><rect x="10" y="1" width="1" height="1"/><rect x="8" y="2" width="3" height="1"/><rect x="8" y="3" width="1" height="1"/><rect x="8" y="4" width="3" height="1"/></g>
<g transform="translate(551.25,294.75) rotate(60) translate(-3.75,-2.75) scale(0.750,1.100)" fill="#58eab4"><rect x="0" y="0" width="1" height="1"/><rect x="2" y="0" width="1" height="1"/><rect x="0" y="1" width="1" height="1"/><rect x="2" y="1" width="1" height="1"/><rect x="0" y="2" width="3" height="1"/><rect x="2" y="3" width="1" height="1"/><rect x="2" y="4" width="1" height="1"/><rect x="4" y="0" width="3" height="1"/><rect x="4" y="1" width="1" height="1"/><rect x="4" y="2" width="3" height="1"/><rect x="6" y="3" width="1" height="1"/><rect x="4" y="4" width="3" height="1"/><rect x="8" y="0" width="2" height="1"/><rect x="8" y="1" width="2" height="1"/></g>
<g transform="translate(607.80,299.40) scale(1.345,0.980)" fill="#58eab4"><rect x="1" y="0" width="2" height="1"/><rect x="0" y="1" width="1" height="1"/><rect x="2" y="1" width="1" height="1"/><rect x="0" y="2" width="3" height="1"/><rect x="0" y="3" width="1" height="1"/><rect x="2" y="3" width="1" height="1"/><rect x="0" y="4" width="2" height="1"/><rect x="4" y="0" width="3" height="1"/><rect x="6" y="1" width="1" height="1"/><rect x="4" y="2" width="3" height="1"/><rect x="6" y="3" width="1" height="1"/><rect x="4" y="4" width="3" height="1"/><rect x="8" y="0" width="3" height="1"/><rect x="8" y="1" width="1" height="1"/><rect x="8" y="2" width="3" height="1"/><rect x="8" y="3" width="1" height="1"/><rect x="10" y="3" width="1" height="1"/><rect x="8" y="4" width="3" height="1"/></g>
<g transform="translate(610.00,306.00) scale(0.923,0.760)" fill="#58eab4"><rect x="1" y="0" width="1" height="1"/><rect x="0" y="1" width="1" height="1"/><rect x="0" y="2" width="1" height="1"/><rect x="0" y="3" width="1" height="1"/><rect x="1" y="4" width="1" height="1"/><rect x="3" y="0" width="3" height="1"/><rect x="5" y="1" width="1" height="1"/><rect x="3" y="2" width="3" height="1"/><rect x="5" y="3" width="1" height="1"/><rect x="3" y="4" width="3" height="1"/><rect x="7" y="0" width="3" height="1"/><rect x="7" y="1" width="1" height="1"/><rect x="7" y="2" width="3" height="1"/><rect x="7" y="3" width="1" height="1"/><rect x="9" y="3" width="1" height="1"/><rect x="7" y="4" width="3" height="1"/><rect x="11" y="0" width="1" height="1"/><rect x="12" y="1" width="1" height="1"/><rect x="12" y="2" width="1" height="1"/><rect x="12" y="3" width="1" height="1"/><rect x="11" y="4" width="1" height="1"/></g>
<g transform="translate(616.00,346.00) rotate(-90) scale(1.143,0.940)" fill="#58eab4"><rect x="0" y="0" width="3" height="1"/><rect x="2" y="1" width="1" height="1"/><rect x="0" y="2" width="3" height="1"/><rect x="0" y="3" width="1" height="1"/><rect x="0" y="4" width="3" height="1"/><rect x="4" y="0" width="3" height="1"/><rect x="6" y="1" width="1" height="1"/><rect x="4" y="2" width="3" height="1"/><rect x="4" y="3" width="1" height="1"/><rect x="4" y="4" width="3" height="1"/></g>
<g transform="translate(595.50,364.00) scale(0.786,0.920)" fill="#58eab4"><rect x="0" y="0" width="2" height="1"/><rect x="0" y="1" width="1" height="1"/><rect x="2" y="1" width="1" height="1"/><rect x="0" y="2" width="2" height="1"/><rect x="0" y="3" width="1" height="1"/><rect x="2" y="3" width="1" height="1"/><rect x="0" y="4" width="1" height="1"/><rect x="2" y="4" width="1" height="1"/><rect x="4" y="0" width="3" height="1"/><rect x="6" y="1" width="1" height="1"/><rect x="4" y="2" width="3" height="1"/><rect x="4" y="3" width="1" height="1"/><rect x="4" y="4" width="3" height="1"/></g>
<g transform="translate(533.00,386.00) scale(0.786,0.800)" fill="#58eab4"><rect x="0" y="0" width="3" height="1"/><rect x="2" y="1" width="1" height="1"/><rect x="0" y="2" width="3" height="1"/><rect x="0" y="3" width="1" height="1"/><rect x="0" y="4" width="3" height="1"/><rect x="4" y="0" width="3" height="1"/><rect x="4" y="1" width="1" height="1"/><rect x="6" y="1" width="1" height="1"/><rect x="4" y="2" width="1" height="1"/><rect x="6" y="2" width="1" height="1"/><rect x="4" y="3" width="1" height="1"/><rect x="6" y="3" width="1" height="1"/><rect x="4" y="4" width="3" height="1"/></g>
<g transform="translate(564.00,386.00) scale(0.714,0.800)" fill="#58eab4"><rect x="0" y="0" width="1" height="1"/><rect x="2" y="0" width="1" height="1"/><rect x="0" y="1" width="1" height="1"/><rect x="2" y="1" width="1" height="1"/><rect x="0" y="2" width="3" height="1"/><rect x="2" y="3" width="1" height="1"/><rect x="2" y="4" width="1" height="1"/><rect x="4" y="0" width="3" height="1"/><rect x="4" y="1" width="1" height="1"/><rect x="4" y="2" width="3" height="1"/><rect x="6" y="3" width="1" height="1"/><rect x="4" y="4" width="3" height="1"/></g>
<g transform="translate(515.50,393.00) scale(0.857,0.800)" fill="#58eab4"><rect x="0" y="0" width="1" height="1"/><rect x="2" y="0" width="1" height="1"/><rect x="0" y="1" width="1" height="1"/><rect x="2" y="1" width="1" height="1"/><rect x="0" y="2" width="3" height="1"/><rect x="2" y="3" width="1" height="1"/><rect x="2" y="4" width="1" height="1"/><rect x="4" y="0" width="3" height="1"/><rect x="6" y="1" width="1" height="1"/><rect x="6" y="2" width="1" height="1"/><rect x="5" y="3" width="1" height="1"/><rect x="5" y="4" width="1" height="1"/></g>
<g transform="translate(496.80,370.00) scale(0.655,0.700)" fill="#58eab4"><rect x="0" y="0" width="2" height="1"/><rect x="0" y="1" width="1" height="1"/><rect x="2" y="1" width="1" height="1"/><rect x="0" y="2" width="2" height="1"/><rect x="0" y="3" width="1" height="1"/><rect x="2" y="3" width="1" height="1"/><rect x="0" y="4" width="1" height="1"/><rect x="2" y="4" width="1" height="1"/><rect x="4" y="0" width="3" height="1"/><rect x="4" y="1" width="1" height="1"/><rect x="4" y="2" width="3" height="1"/><rect x="4" y="3" width="1" height="1"/><rect x="6" y="3" width="1" height="1"/><rect x="4" y="4" width="3" height="1"/><rect x="8" y="0" width="3" height="1"/><rect x="8" y="1" width="1" height="1"/><rect x="10" y="1" width="1" height="1"/><rect x="8" y="2" width="1" height="1"/><rect x="10" y="2" width="1" height="1"/><rect x="8" y="3" width="1" height="1"/><rect x="10" y="3" width="1" height="1"/><rect x="8" y="4" width="3" height="1"/></g>
<g transform="translate(505.00,370.70) scale(0.700,0.780)" fill="#58eab4"><rect x="0" y="0" width="3" height="1"/><rect x="2" y="1" width="1" height="1"/><rect x="0" y="2" width="3" height="1"/><rect x="2" y="3" width="1" height="1"/><rect x="0" y="4" width="3" height="1"/><rect x="4" y="0" width="3" height="1"/><rect x="4" y="1" width="1" height="1"/><rect x="6" y="1" width="1" height="1"/><rect x="4" y="2" width="1" height="1"/><rect x="6" y="2" width="1" height="1"/><rect x="4" y="3" width="1" height="1"/><rect x="6" y="3" width="1" height="1"/><rect x="4" y="4" width="3" height="1"/><rect x="8" y="0" width="2" height="1"/><rect x="8" y="1" width="2" height="1"/></g>
<g fill="#f08cb4" opacity="1.0"><rect x="147" y="517" width="5" height="1"/><rect x="148" y="519" width="4" height="1"/><rect x="147" y="521" width="5" height="1"/><rect x="148" y="523" width="3" height="1"/><rect x="149" y="517" width="1" height="8"/><rect x="151" y="519" width="1" height="6"/><rect x="147" y="524" width="2" height="1"/><rect x="150" y="521" width="2" height="2"/></g>
<g fill="#f08cb4" opacity="1.0"><rect x="154" y="518" width="5" height="1"/><rect x="156" y="517" width="1" height="4"/><rect x="155" y="520" width="3" height="1"/><rect x="154" y="522" width="5" height="1"/><rect x="155" y="522" width="1" height="3"/><rect x="157" y="522" width="1" height="3"/><rect x="155" y="524" width="3" height="1"/><rect x="156" y="524" width="2" height="1"/></g>
<g fill="#f08cb4" opacity="1.0"><rect x="160" y="518" width="1" height="6"/><rect x="161" y="518" width="2" height="1"/><rect x="161" y="521" width="2" height="1"/><rect x="161" y="524" width="2" height="1"/><rect x="164" y="517" width="1" height="8"/><rect x="163" y="519" width="2" height="1"/><rect x="163" y="522" width="2" height="1"/><rect x="163" y="521" width="2" height="1"/></g>
<g fill="#f08cb4" opacity="1.0"><rect x="168" y="517" width="1" height="8"/><rect x="167" y="519" width="3" height="1"/><rect x="167" y="522" width="2" height="1"/><rect x="170" y="518" width="2" height="1"/><rect x="170" y="521" width="2" height="1"/><rect x="170" y="524" width="2" height="1"/><rect x="171" y="518" width="1" height="7"/><rect x="170" y="518" width="1" height="7"/></g>
<text transform="translate(52,554) scale(0.78,1)" font-size="11.04" fill="#f08cb4">1</text>
<path d="M57.48,550.5 L59.48,553" stroke="#f08cb4" stroke-width="1" fill="none"/>
<g fill="#f08cb4" opacity="1.0"><rect x="62" y="546" width="1" height="8"/><rect x="61" y="548" width="3" height="1"/><rect x="61" y="551" width="2" height="1"/><rect x="64" y="547" width="3" height="1"/><rect x="64" y="550" width="3" height="1"/><rect x="64" y="553" width="3" height="1"/><rect x="66" y="547" width="1" height="7"/><rect x="64" y="547" width="1" height="7"/></g>
<g fill="#f08cb4" opacity="1.0"><rect x="69" y="546" width="1" height="8"/><rect x="68" y="548" width="3" height="1"/><rect x="68" y="551" width="2" height="1"/><rect x="71" y="547" width="3" height="1"/><rect x="71" y="550" width="3" height="1"/><rect x="71" y="553" width="3" height="1"/><rect x="73" y="547" width="1" height="7"/><rect x="71" y="547" width="1" height="7"/></g>
<g fill="#f08cb4" opacity="1.0"><rect x="74" y="546" width="6" height="1"/><rect x="75" y="548" width="5" height="1"/><rect x="74" y="550" width="6" height="1"/><rect x="75" y="552" width="4" height="1"/><rect x="76" y="546" width="1" height="8"/><rect x="79" y="548" width="1" height="6"/><rect x="74" y="553" width="2" height="1"/><rect x="77" y="550" width="2" height="2"/></g>
<g fill="#f08cb4" opacity="1.0"><rect x="81" y="546" width="1" height="8"/><rect x="80" y="548" width="3" height="1"/><rect x="80" y="551" width="2" height="1"/><rect x="83" y="547" width="3" height="1"/><rect x="83" y="550" width="3" height="1"/><rect x="83" y="553" width="3" height="1"/><rect x="85" y="547" width="1" height="7"/><rect x="83" y="547" width="1" height="7"/></g>
<text transform="translate(86.54,554) scale(0.78,1)" font-size="11.04" fill="#f08cb4">7</text>
<text transform="translate(91.52,554) scale(0.78,1)" font-size="11.04" fill="#f08cb4">7</text>
<text transform="translate(52,568) scale(0.78,1)" font-size="11.04" fill="#f08cb4">2</text>
<path d="M57.69,564.5 L59.69,567" stroke="#f08cb4" stroke-width="1" fill="none"/>
<g fill="#f08cb4" opacity="1.0"><rect x="62" y="561" width="6" height="1"/><rect x="65" y="560" width="1" height="4"/><rect x="63" y="563" width="4" height="1"/><rect x="62" y="565" width="6" height="1"/><rect x="63" y="565" width="1" height="3"/><rect x="66" y="565" width="1" height="3"/><rect x="63" y="567" width="4" height="1"/><rect x="64" y="567" width="3" height="1"/></g>
<g fill="#f08cb4" opacity="1.0"><rect x="69" y="560" width="1" height="8"/><rect x="68" y="562" width="3" height="1"/><rect x="68" y="565" width="2" height="1"/><rect x="71" y="561" width="3" height="1"/><rect x="71" y="564" width="3" height="1"/><rect x="71" y="567" width="3" height="1"/><rect x="73" y="561" width="1" height="7"/><rect x="71" y="561" width="1" height="7"/></g>
<g fill="#f08cb4" opacity="1.0"><rect x="76" y="560" width="1" height="8"/><rect x="75" y="562" width="3" height="1"/><rect x="75" y="565" width="2" height="1"/><rect x="78" y="561" width="3" height="1"/><rect x="78" y="564" width="3" height="1"/><rect x="78" y="567" width="3" height="1"/><rect x="80" y="561" width="1" height="7"/><rect x="78" y="561" width="1" height="7"/></g>
<g fill="#f08cb4" opacity="1.0"><rect x="81" y="561" width="1" height="6"/><rect x="82" y="561" width="2" height="1"/><rect x="82" y="564" width="2" height="1"/><rect x="82" y="567" width="2" height="1"/><rect x="85" y="560" width="1" height="8"/><rect x="84" y="562" width="3" height="1"/><rect x="84" y="565" width="3" height="1"/><rect x="84" y="564" width="3" height="1"/><rect x="86" y="562" width="1" height="4"/></g>
<g fill="#f08cb4" opacity="1.0"><rect x="88" y="561" width="1" height="6"/><rect x="89" y="561" width="2" height="1"/><rect x="89" y="564" width="2" height="1"/><rect x="89" y="567" width="2" height="1"/><rect x="92" y="560" width="1" height="8"/><rect x="91" y="562" width="3" height="1"/><rect x="91" y="565" width="3" height="1"/><rect x="91" y="564" width="3" height="1"/><rect x="93" y="562" width="1" height="4"/></g>
<text transform="translate(94.53,568) scale(0.78,1)" font-size="11.04" fill="#f08cb4">R</text>
<text transform="translate(99.72,568) scale(0.78,1)" font-size="11.04" fill="#f08cb4">2</text>
<rect x="105" y="567" width="1" height="1" fill="#f08cb4"/>
<text transform="translate(107.5,568) scale(0.78,1)" font-size="11.04" fill="#f08cb4">5</text>
<rect x="113" y="566" width="2" height="2" fill="#f08cb4"/>
<text transform="translate(52,582) scale(0.78,1)" font-size="11.04" fill="#f08cb4">3</text>
<path d="M57.68,578.5 L59.68,581" stroke="#f08cb4" stroke-width="1" fill="none"/>
<g fill="#f08cb4" opacity="1.0"><rect x="63" y="574" width="1" height="8"/><rect x="62" y="576" width="3" height="1"/><rect x="62" y="579" width="2" height="1"/><rect x="65" y="575" width="3" height="1"/><rect x="65" y="578" width="3" height="1"/><rect x="65" y="581" width="3" height="1"/><rect x="67" y="575" width="1" height="7"/><rect x="65" y="575" width="1" height="7"/></g>
<g fill="#f08cb4" opacity="1.0"><rect x="68" y="575" width="6" height="1"/><rect x="71" y="574" width="1" height="4"/><rect x="69" y="577" width="4" height="1"/><rect x="68" y="579" width="6" height="1"/><rect x="69" y="579" width="1" height="3"/><rect x="72" y="579" width="1" height="3"/><rect x="69" y="581" width="4" height="1"/><rect x="70" y="581" width="3" height="1"/></g>
<g fill="#f08cb4" opacity="1.0"><rect x="76" y="574" width="1" height="8"/><rect x="75" y="576" width="3" height="1"/><rect x="75" y="579" width="2" height="1"/><rect x="78" y="575" width="3" height="1"/><rect x="78" y="578" width="3" height="1"/><rect x="78" y="581" width="3" height="1"/><rect x="80" y="575" width="1" height="7"/><rect x="78" y="575" width="1" height="7"/></g>
<g fill="#f08cb4" opacity="1.0"><rect x="81" y="575" width="1" height="6"/><rect x="82" y="575" width="2" height="1"/><rect x="82" y="578" width="2" height="1"/><rect x="82" y="581" width="2" height="1"/><rect x="85" y="574" width="1" height="8"/><rect x="84" y="576" width="3" height="1"/><rect x="84" y="579" width="3" height="1"/><rect x="84" y="578" width="3" height="1"/><rect x="86" y="576" width="1" height="4"/></g>
<g fill="#f08cb4" opacity="1.0"><rect x="89" y="574" width="1" height="8"/><rect x="88" y="576" width="3" height="1"/><rect x="88" y="579" width="2" height="1"/><rect x="91" y="575" width="3" height="1"/><rect x="91" y="578" width="3" height="1"/><rect x="91" y="581" width="3" height="1"/><rect x="93" y="575" width="1" height="7"/><rect x="91" y="575" width="1" height="7"/></g>
<g fill="#f08cb4" opacity="1.0"><rect x="95" y="574" width="1" height="8"/><rect x="94" y="576" width="3" height="1"/><rect x="94" y="579" width="2" height="1"/><rect x="97" y="575" width="3" height="1"/><rect x="97" y="578" width="3" height="1"/><rect x="97" y="581" width="3" height="1"/><rect x="99" y="575" width="1" height="7"/><rect x="97" y="575" width="1" height="7"/></g>
<text transform="translate(100.98,582) scale(0.78,1)" font-size="11.04" fill="#f08cb4">H</text>
<text transform="translate(106.15,582) scale(0.78,1)" font-size="11.04" fill="#f08cb4">B</text>
<text transform="translate(111.33,582) scale(0.78,1)" font-size="11.04" fill="#f08cb4">-</text>
<text transform="translate(116.51,582) scale(0.78,1)" font-size="11.04" fill="#f08cb4">6</text>
<text transform="translate(121.68,582) scale(0.78,1)" font-size="11.04" fill="#f08cb4">-</text>
<text transform="translate(126.86,582) scale(0.78,1)" font-size="11.04" fill="#f08cb4">6</text>
<text transform="translate(132.04,582) scale(0.78,1)" font-size="11.04" fill="#f08cb4">7</text>
<text transform="translate(137.22,582) scale(0.78,1)" font-size="11.04" fill="#f08cb4">-</text>
<text transform="translate(142.39,582) scale(0.78,1)" font-size="11.04" fill="#f08cb4">5</text>
<g fill="#f08cb4" opacity="1.0"><rect x="148" y="575" width="6" height="1"/><rect x="151" y="574" width="1" height="4"/><rect x="149" y="577" width="4" height="1"/><rect x="148" y="579" width="6" height="1"/><rect x="149" y="579" width="1" height="3"/><rect x="152" y="579" width="1" height="3"/><rect x="149" y="581" width="4" height="1"/><rect x="150" y="581" width="3" height="1"/></g>
<rect x="154" y="580" width="2" height="2" fill="#f08cb4"/>
<text transform="translate(52,597) scale(0.78,1)" font-size="12.42" fill="#f08cb4">4</text>
<path d="M57.64,593.5 L59.64,596" stroke="#f08cb4" stroke-width="1" fill="none"/>
<g fill="#f08cb4" opacity="1.0"><rect x="63" y="588" width="1" height="9"/><rect x="62" y="590" width="3" height="1"/><rect x="62" y="593" width="2" height="1"/><rect x="65" y="589" width="3" height="1"/><rect x="65" y="592" width="3" height="1"/><rect x="65" y="596" width="3" height="1"/><rect x="67" y="589" width="1" height="8"/><rect x="65" y="589" width="1" height="8"/></g>
<g fill="#f08cb4" opacity="1.0"><rect x="68" y="589" width="1" height="7"/><rect x="69" y="589" width="2" height="1"/><rect x="69" y="592" width="2" height="1"/><rect x="69" y="596" width="2" height="1"/><rect x="72" y="588" width="1" height="9"/><rect x="71" y="590" width="3" height="1"/><rect x="71" y="594" width="3" height="1"/><rect x="71" y="592" width="3" height="1"/><rect x="73" y="590" width="1" height="5"/></g>
<g fill="#f08cb4" opacity="1.0"><rect x="76" y="588" width="1" height="9"/><rect x="75" y="590" width="3" height="1"/><rect x="75" y="593" width="2" height="1"/><rect x="78" y="589" width="3" height="1"/><rect x="78" y="592" width="3" height="1"/><rect x="78" y="596" width="3" height="1"/><rect x="80" y="589" width="1" height="8"/><rect x="78" y="589" width="1" height="8"/></g>
<g fill="#f08cb4" opacity="1.0"><rect x="81" y="589" width="6" height="1"/><rect x="84" y="588" width="1" height="4"/><rect x="82" y="591" width="4" height="1"/><rect x="81" y="593" width="6" height="1"/><rect x="82" y="593" width="1" height="3"/><rect x="85" y="593" width="1" height="3"/><rect x="82" y="596" width="4" height="1"/><rect x="83" y="595" width="3" height="1"/></g>
<g fill="#f08cb4" opacity="1.0"><rect x="89" y="588" width="1" height="9"/><rect x="88" y="590" width="3" height="1"/><rect x="88" y="593" width="2" height="1"/><rect x="91" y="589" width="3" height="1"/><rect x="91" y="592" width="3" height="1"/><rect x="91" y="596" width="3" height="1"/><rect x="93" y="589" width="1" height="8"/><rect x="91" y="589" width="1" height="8"/></g>
<text transform="translate(94.12,597) scale(0.78,1)" font-size="12.42" fill="#f08cb4">1</text>
<text transform="translate(99.26,597) scale(0.78,1)" font-size="12.42" fill="#f08cb4">/</text>
<text transform="translate(103.37,597) scale(0.78,1)" font-size="12.42" fill="#f08cb4">2</text>
<g fill="#f08cb4" opacity="1.0"><rect x="109" y="589" width="6" height="1"/><rect x="112" y="588" width="1" height="4"/><rect x="110" y="591" width="4" height="1"/><rect x="109" y="593" width="6" height="1"/><rect x="110" y="593" width="1" height="3"/><rect x="113" y="593" width="1" height="3"/><rect x="110" y="596" width="4" height="1"/><rect x="111" y="595" width="3" height="1"/></g>
<g fill="#f08cb4" opacity="1.0"><rect x="115" y="588" width="6" height="1"/><rect x="116" y="590" width="5" height="1"/><rect x="115" y="592" width="6" height="1"/><rect x="116" y="595" width="4" height="1"/><rect x="117" y="588" width="1" height="9"/><rect x="120" y="590" width="1" height="7"/><rect x="115" y="596" width="2" height="1"/><rect x="118" y="593" width="2" height="2"/></g>
<g fill="#f08cb4" opacity="1.0"><rect x="121" y="589" width="1" height="7"/><rect x="122" y="589" width="2" height="1"/><rect x="122" y="592" width="2" height="1"/><rect x="122" y="596" width="2" height="1"/><rect x="125" y="588" width="1" height="9"/><rect x="124" y="590" width="3" height="1"/><rect x="124" y="594" width="3" height="1"/><rect x="124" y="592" width="3" height="1"/><rect x="126" y="590" width="1" height="5"/></g>
<rect x="128" y="595" width="2" height="2" fill="#f08cb4"/>
<text transform="translate(187.4,554) scale(0.78,1)" font-size="11.04" fill="#f08cb4">5</text>
<path d="M192.88,550.5 L194.88,553" stroke="#f08cb4" stroke-width="1" fill="none"/>
<g fill="#f08cb4" opacity="1.0"><rect x="197" y="547" width="6" height="1"/><rect x="200" y="546" width="1" height="4"/><rect x="198" y="549" width="4" height="1"/><rect x="197" y="551" width="6" height="1"/><rect x="198" y="551" width="1" height="3"/><rect x="201" y="551" width="1" height="3"/><rect x="198" y="553" width="4" height="1"/><rect x="199" y="553" width="3" height="1"/></g>
<g fill="#f08cb4" opacity="1.0"><rect x="204" y="546" width="1" height="8"/><rect x="203" y="548" width="3" height="1"/><rect x="203" y="551" width="2" height="1"/><rect x="206" y="547" width="3" height="1"/><rect x="206" y="550" width="3" height="1"/><rect x="206" y="553" width="3" height="1"/><rect x="208" y="547" width="1" height="7"/><rect x="206" y="547" width="1" height="7"/></g>
<g fill="#f08cb4" opacity="1.0"><rect x="209" y="546" width="6" height="1"/><rect x="210" y="548" width="5" height="1"/><rect x="209" y="550" width="6" height="1"/><rect x="210" y="552" width="4" height="1"/><rect x="211" y="546" width="1" height="8"/><rect x="214" y="548" width="1" height="6"/><rect x="209" y="553" width="2" height="1"/><rect x="212" y="550" width="2" height="2"/></g>
<g fill="#f08cb4" opacity="1.0"><rect x="216" y="547" width="6" height="1"/><rect x="219" y="546" width="1" height="4"/><rect x="217" y="549" width="4" height="1"/><rect x="216" y="551" width="6" height="1"/><rect x="217" y="551" width="1" height="3"/><rect x="220" y="551" width="1" height="3"/><rect x="217" y="553" width="4" height="1"/><rect x="218" y="553" width="3" height="1"/></g>
<g fill="#f08cb4" opacity="1.0"><rect x="223" y="546" width="1" height="8"/><rect x="222" y="548" width="3" height="1"/><rect x="222" y="551" width="2" height="1"/><rect x="225" y="547" width="3" height="1"/><rect x="225" y="550" width="3" height="1"/><rect x="225" y="553" width="3" height="1"/><rect x="227" y="547" width="1" height="7"/><rect x="225" y="547" width="1" height="7"/></g>
<text transform="translate(228.26,554) scale(0.78,1)" font-size="11.04" fill="#f08cb4">0</text>
<rect x="233" y="553" width="1" height="1" fill="#f08cb4"/>
<text transform="translate(235.73,554) scale(0.78,1)" font-size="11.04" fill="#f08cb4">6</text>
<g fill="#f08cb4" opacity="1.0"><rect x="241" y="547" width="6" height="1"/><rect x="244" y="546" width="1" height="4"/><rect x="242" y="549" width="4" height="1"/><rect x="241" y="551" width="6" height="1"/><rect x="242" y="551" width="1" height="3"/><rect x="245" y="551" width="1" height="3"/><rect x="242" y="553" width="4" height="1"/><rect x="243" y="553" width="3" height="1"/></g>
<g fill="#f08cb4" opacity="1.0"><rect x="247" y="546" width="6" height="1"/><rect x="248" y="548" width="5" height="1"/><rect x="247" y="550" width="6" height="1"/><rect x="248" y="552" width="4" height="1"/><rect x="249" y="546" width="1" height="8"/><rect x="252" y="548" width="1" height="6"/><rect x="247" y="553" width="2" height="1"/><rect x="250" y="550" width="2" height="2"/></g>
<g fill="#f08cb4" opacity="1.0"><rect x="254" y="546" width="1" height="8"/><rect x="253" y="548" width="3" height="1"/><rect x="253" y="551" width="2" height="1"/><rect x="256" y="547" width="3" height="1"/><rect x="256" y="550" width="3" height="1"/><rect x="256" y="553" width="3" height="1"/><rect x="258" y="547" width="1" height="7"/><rect x="256" y="547" width="1" height="7"/></g>
<g fill="#f08cb4" opacity="1.0"><rect x="261" y="546" width="1" height="8"/><rect x="260" y="548" width="3" height="1"/><rect x="260" y="551" width="2" height="1"/><rect x="263" y="547" width="3" height="1"/><rect x="263" y="550" width="3" height="1"/><rect x="263" y="553" width="3" height="1"/><rect x="265" y="547" width="1" height="7"/><rect x="263" y="547" width="1" height="7"/></g>
<text transform="translate(265.83,554) scale(0.78,1)" font-size="11.04" fill="#f08cb4">?</text>
<rect x="270" y="552" width="2" height="2" fill="#f08cb4"/>
<text transform="translate(193.1,568) scale(0.78,1)" font-size="11.04" fill="#f08cb4">6</text>
<path d="M198.75,564.5 L200.75,567" stroke="#f08cb4" stroke-width="1" fill="none"/>
<g fill="#f08cb4" opacity="1.0"><rect x="204" y="560" width="1" height="8"/><rect x="203" y="562" width="3" height="1"/><rect x="203" y="565" width="2" height="1"/><rect x="206" y="561" width="3" height="1"/><rect x="206" y="564" width="3" height="1"/><rect x="206" y="567" width="3" height="1"/><rect x="208" y="561" width="1" height="7"/><rect x="206" y="561" width="1" height="7"/></g>
<g fill="#f08cb4" opacity="1.0"><rect x="209" y="561" width="6" height="1"/><rect x="212" y="560" width="1" height="4"/><rect x="210" y="563" width="4" height="1"/><rect x="209" y="565" width="6" height="1"/><rect x="210" y="565" width="1" height="3"/><rect x="213" y="565" width="1" height="3"/><rect x="210" y="567" width="4" height="1"/><rect x="211" y="567" width="3" height="1"/></g>
<text transform="translate(215.85,568) scale(0.78,1)" font-size="11.04" fill="#f08cb4">H</text>
<text transform="translate(220.99,568) scale(0.78,1)" font-size="11.04" fill="#f08cb4">B</text>
<text transform="translate(226.14,568) scale(0.78,1)" font-size="11.04" fill="#f08cb4">=</text>
<text transform="translate(231.29,568) scale(0.78,1)" font-size="11.04" fill="#f08cb4">1</text>
<text transform="translate(236.43,568) scale(0.78,1)" font-size="11.04" fill="#f08cb4">5</text>
<text transform="translate(241.58,568) scale(0.78,1)" font-size="11.04" fill="#f08cb4">6</text>
<text transform="translate(246.73,568) scale(0.78,1)" font-size="11.04" fill="#f08cb4">-</text>
<text transform="translate(251.87,568) scale(0.78,1)" font-size="11.04" fill="#f08cb4">2</text>
<text transform="translate(257.02,568) scale(0.78,1)" font-size="11.04" fill="#f08cb4">2</text>
<text transform="translate(262.17,568) scale(0.78,1)" font-size="11.04" fill="#f08cb4">9</text>
<rect x="267" y="566" width="2" height="2" fill="#f08cb4"/>
<text transform="translate(193.1,583) scale(0.78,1)" font-size="12.42" fill="#f08cb4">7</text>
<path d="M198.59,579.5 L200.59,582" stroke="#f08cb4" stroke-width="1" fill="none"/>
<g fill="#f08cb4" opacity="1.0"><rect x="203" y="575" width="1" height="7"/><rect x="204" y="575" width="2" height="1"/><rect x="204" y="578" width="2" height="1"/><rect x="204" y="582" width="2" height="1"/><rect x="207" y="574" width="1" height="9"/><rect x="206" y="576" width="3" height="1"/><rect x="206" y="580" width="3" height="1"/><rect x="206" y="578" width="3" height="1"/><rect x="208" y="576" width="1" height="5"/></g>
<g fill="#f08cb4" opacity="1.0"><rect x="209" y="575" width="1" height="7"/><rect x="210" y="575" width="2" height="1"/><rect x="210" y="578" width="2" height="1"/><rect x="210" y="582" width="2" height="1"/><rect x="213" y="574" width="1" height="9"/><rect x="212" y="576" width="3" height="1"/><rect x="212" y="580" width="3" height="1"/><rect x="212" y="578" width="3" height="1"/><rect x="214" y="576" width="1" height="5"/></g>
<g fill="#f08cb4" opacity="1.0"><rect x="215" y="574" width="6" height="1"/><rect x="216" y="576" width="5" height="1"/><rect x="215" y="578" width="6" height="1"/><rect x="216" y="581" width="4" height="1"/><rect x="217" y="574" width="1" height="9"/><rect x="220" y="576" width="1" height="7"/><rect x="215" y="582" width="2" height="1"/><rect x="218" y="579" width="2" height="2"/></g>
<g fill="#f08cb4" opacity="1.0"><rect x="221" y="575" width="1" height="7"/><rect x="222" y="575" width="2" height="1"/><rect x="222" y="578" width="2" height="1"/><rect x="222" y="582" width="2" height="1"/><rect x="225" y="574" width="1" height="9"/><rect x="224" y="576" width="3" height="1"/><rect x="224" y="580" width="3" height="1"/><rect x="224" y="578" width="3" height="1"/><rect x="226" y="576" width="1" height="5"/></g>
<g fill="#f08cb4" opacity="1.0"><rect x="228" y="575" width="1" height="7"/><rect x="229" y="575" width="2" height="1"/><rect x="229" y="578" width="2" height="1"/><rect x="229" y="582" width="2" height="1"/><rect x="232" y="574" width="1" height="9"/><rect x="231" y="576" width="3" height="1"/><rect x="231" y="580" width="3" height="1"/><rect x="231" y="578" width="3" height="1"/><rect x="233" y="576" width="1" height="5"/></g>
<g fill="#f08cb4" opacity="1.0"><rect x="234" y="574" width="6" height="1"/><rect x="235" y="576" width="5" height="1"/><rect x="234" y="578" width="6" height="1"/><rect x="235" y="581" width="4" height="1"/><rect x="236" y="574" width="1" height="9"/><rect x="239" y="576" width="1" height="7"/><rect x="234" y="582" width="2" height="1"/><rect x="237" y="579" width="2" height="2"/></g>
<g fill="#f08cb4" opacity="1.0"><rect x="240" y="574" width="6" height="1"/><rect x="241" y="576" width="5" height="1"/><rect x="240" y="578" width="6" height="1"/><rect x="241" y="581" width="4" height="1"/><rect x="242" y="574" width="1" height="9"/><rect x="245" y="576" width="1" height="7"/><rect x="240" y="582" width="2" height="1"/><rect x="243" y="579" width="2" height="2"/></g>
<g fill="#f08cb4" opacity="1.0"><rect x="247" y="575" width="6" height="1"/><rect x="250" y="574" width="1" height="4"/><rect x="248" y="577" width="4" height="1"/><rect x="247" y="579" width="6" height="1"/><rect x="248" y="579" width="1" height="3"/><rect x="251" y="579" width="1" height="3"/><rect x="248" y="582" width="4" height="1"/><rect x="249" y="581" width="3" height="1"/></g>
<g fill="#f08cb4" opacity="1.0"><rect x="253" y="575" width="6" height="1"/><rect x="256" y="574" width="1" height="4"/><rect x="254" y="577" width="4" height="1"/><rect x="253" y="579" width="6" height="1"/><rect x="254" y="579" width="1" height="3"/><rect x="257" y="579" width="1" height="3"/><rect x="254" y="582" width="4" height="1"/><rect x="255" y="581" width="3" height="1"/></g>
<rect x="259" y="581" width="2" height="2" fill="#f08cb4"/>
<text transform="translate(191.7,597) scale(0.78,1)" font-size="12.42" fill="#f08cb4">8</text>
<path d="M197.32,593.5 L199.32,596" stroke="#f08cb4" stroke-width="1" fill="none"/>
<g fill="#f08cb4" opacity="1.0"><rect x="201" y="589" width="6" height="1"/><rect x="204" y="588" width="1" height="4"/><rect x="202" y="591" width="4" height="1"/><rect x="201" y="593" width="6" height="1"/><rect x="202" y="593" width="1" height="3"/><rect x="205" y="593" width="1" height="3"/><rect x="202" y="596" width="4" height="1"/><rect x="203" y="595" width="3" height="1"/></g>
<g fill="#f08cb4" opacity="1.0"><rect x="209" y="588" width="1" height="9"/><rect x="208" y="590" width="3" height="1"/><rect x="208" y="593" width="2" height="1"/><rect x="211" y="589" width="3" height="1"/><rect x="211" y="592" width="3" height="1"/><rect x="211" y="596" width="3" height="1"/><rect x="213" y="589" width="1" height="8"/><rect x="211" y="589" width="1" height="8"/></g>
<g fill="#f08cb4" opacity="1.0"><rect x="214" y="588" width="6" height="1"/><rect x="215" y="590" width="5" height="1"/><rect x="214" y="592" width="6" height="1"/><rect x="215" y="595" width="4" height="1"/><rect x="216" y="588" width="1" height="9"/><rect x="219" y="590" width="1" height="7"/><rect x="214" y="596" width="2" height="1"/><rect x="217" y="593" width="2" height="2"/></g>
<text transform="translate(220.79,597) scale(0.78,1)" font-size="12.42" fill="#f08cb4">H</text>
<text transform="translate(225.92,597) scale(0.78,1)" font-size="12.42" fill="#f08cb4">B</text>
<text transform="translate(231.04,597) scale(0.78,1)" font-size="12.42" fill="#f08cb4">5</text>
<text transform="translate(236.16,597) scale(0.78,1)" font-size="12.42" fill="#f08cb4">0</text>
<text transform="translate(241.28,597) scale(0.78,1)" font-size="12.42" fill="#f08cb4">2</text>
<text transform="translate(246.41,597) scale(0.78,1)" font-size="12.42" fill="#f08cb4">4</text>
<text transform="translate(251.53,597) scale(0.78,1)" font-size="12.42" fill="#f08cb4">-</text>
<text transform="translate(256.65,597) scale(0.78,1)" font-size="12.42" fill="#f08cb4">7</text>
<text transform="translate(261.77,597) scale(0.78,1)" font-size="12.42" fill="#f08cb4">7</text>
<text transform="translate(266.9,597) scale(0.78,1)" font-size="12.42" fill="#f08cb4">-</text>
<g fill="#f08cb4"><rect x="272" y="588" width="5" height="1"/><rect x="272" y="596" width="5" height="1"/><rect x="272" y="588" width="1" height="9"/><rect x="274" y="588" width="1" height="9"/><rect x="276" y="588" width="1" height="9"/></g>
<g fill="#f08cb4" opacity="1.0"><rect x="278" y="589" width="1" height="7"/><rect x="279" y="589" width="2" height="1"/><rect x="279" y="592" width="2" height="1"/><rect x="279" y="596" width="2" height="1"/><rect x="282" y="588" width="1" height="9"/><rect x="281" y="590" width="3" height="1"/><rect x="281" y="594" width="3" height="1"/><rect x="281" y="592" width="3" height="1"/><rect x="283" y="590" width="1" height="5"/></g>
<g fill="#f08cb4" opacity="1.0"><rect x="285" y="588" width="6" height="1"/><rect x="286" y="590" width="5" height="1"/><rect x="285" y="592" width="6" height="1"/><rect x="286" y="595" width="4" height="1"/><rect x="287" y="588" width="1" height="9"/><rect x="290" y="590" width="1" height="7"/><rect x="285" y="596" width="2" height="1"/><rect x="288" y="593" width="2" height="2"/></g>
<g fill="#f08cb4" opacity="1.0"><rect x="291" y="589" width="1" height="7"/><rect x="292" y="589" width="2" height="1"/><rect x="292" y="592" width="2" height="1"/><rect x="292" y="596" width="2" height="1"/><rect x="295" y="588" width="1" height="9"/><rect x="294" y="590" width="3" height="1"/><rect x="294" y="594" width="3" height="1"/><rect x="294" y="592" width="3" height="1"/><rect x="296" y="590" width="1" height="5"/></g>
<rect x="298" y="595" width="2" height="2" fill="#f08cb4"/>
<line x1="773.5" y1="589.5" x2="912.5" y2="589.5" stroke="#ffffff" stroke-width="1" />
<line x1="773.5" y1="589.5" x2="773.5" y2="624.5" stroke="#ffffff" stroke-width="1" />
<line x1="842.5" y1="589.5" x2="842.5" y2="624.5" stroke="#ffffff" stroke-width="1" />
<line x1="855.5" y1="589.5" x2="855.5" y2="615.5" stroke="#ffffff" stroke-width="1" />
<line x1="874.5" y1="589.5" x2="874.5" y2="615.5" stroke="#ffffff" stroke-width="1" />
<line x1="887.5" y1="589.5" x2="887.5" y2="615.5" stroke="#ffffff" stroke-width="1" />
<line x1="911.5" y1="589.5" x2="911.5" y2="624.5" stroke="#ffffff" stroke-width="1" />
<line x1="842.5" y1="598.5" x2="912.5" y2="598.5" stroke="#ffffff" stroke-width="1" />
<line x1="773.5" y1="606.5" x2="874.5" y2="606.5" stroke="#ffffff" stroke-width="1" />
<line x1="773.5" y1="615.5" x2="912.5" y2="615.5" stroke="#ffffff" stroke-width="1" />
<line x1="786.5" y1="606.5" x2="786.5" y2="624.5" stroke="#ffffff" stroke-width="1" />
<line x1="816.5" y1="606.5" x2="816.5" y2="624.5" stroke="#ffffff" stroke-width="1" />
<g fill="#f08cb4" opacity="1.0"><rect x="787" y="594" width="6" height="1"/><rect x="788" y="596" width="5" height="1"/><rect x="787" y="598" width="6" height="1"/><rect x="788" y="601" width="4" height="1"/><rect x="789" y="594" width="1" height="9"/><rect x="792" y="596" width="1" height="7"/><rect x="787" y="602" width="2" height="1"/><rect x="790" y="599" width="2" height="2"/></g>
<g fill="#f08cb4" opacity="1.0"><rect x="802" y="594" width="1" height="9"/><rect x="801" y="596" width="3" height="1"/><rect x="801" y="599" width="2" height="1"/><rect x="804" y="595" width="4" height="1"/><rect x="804" y="598" width="4" height="1"/><rect x="804" y="602" width="4" height="1"/><rect x="807" y="595" width="1" height="8"/><rect x="804" y="595" width="1" height="8"/></g>
<g fill="#f08cb4" opacity="1.0"><rect x="817" y="594" width="1" height="9"/><rect x="816" y="596" width="3" height="1"/><rect x="816" y="599" width="2" height="1"/><rect x="819" y="595" width="3" height="1"/><rect x="819" y="598" width="3" height="1"/><rect x="819" y="602" width="3" height="1"/><rect x="821" y="595" width="1" height="8"/><rect x="819" y="595" width="1" height="8"/></g>
<g fill="#f08cb4" opacity="1.0"><rect x="775" y="610" width="1" height="4"/><rect x="776" y="610" width="2" height="1"/><rect x="776" y="612" width="2" height="1"/><rect x="776" y="614" width="2" height="1"/><rect x="779" y="609" width="1" height="6"/><rect x="778" y="611" width="4" height="1"/><rect x="778" y="612" width="4" height="1"/><rect x="778" y="612" width="4" height="1"/><rect x="781" y="611" width="1" height="2"/></g>
<g fill="#f08cb4" opacity="1.0"><rect x="792" y="609" width="5" height="1"/><rect x="794" y="608" width="1" height="3"/><rect x="793" y="610" width="3" height="1"/><rect x="792" y="612" width="5" height="1"/><rect x="793" y="612" width="1" height="2"/><rect x="795" y="612" width="1" height="2"/><rect x="793" y="613" width="3" height="1"/><rect x="794" y="614" width="2" height="1"/></g>
<g fill="#f08cb4" opacity="1.0"><rect x="802" y="608" width="5" height="1"/><rect x="803" y="610" width="4" height="1"/><rect x="802" y="612" width="5" height="1"/><rect x="803" y="612" width="3" height="1"/><rect x="804" y="608" width="1" height="6"/><rect x="806" y="610" width="1" height="4"/><rect x="802" y="613" width="2" height="1"/><rect x="805" y="610" width="2" height="2"/></g>
<g fill="#f08cb4" opacity="1.0"><rect x="811" y="609" width="5" height="1"/><rect x="813" y="608" width="1" height="3"/><rect x="812" y="610" width="3" height="1"/><rect x="811" y="612" width="5" height="1"/><rect x="812" y="612" width="1" height="2"/><rect x="814" y="612" width="1" height="2"/><rect x="812" y="613" width="3" height="1"/><rect x="813" y="614" width="2" height="1"/></g>
<g fill="#f08cb4" opacity="1.0"><rect x="775" y="618" width="1" height="5"/><rect x="776" y="618" width="2" height="1"/><rect x="776" y="620" width="2" height="1"/><rect x="776" y="623" width="2" height="1"/><rect x="779" y="617" width="1" height="7"/><rect x="778" y="619" width="4" height="1"/><rect x="778" y="621" width="4" height="1"/><rect x="778" y="620" width="4" height="1"/><rect x="781" y="619" width="1" height="3"/></g>
<g fill="#f08cb4" opacity="1.0"><rect x="845" y="593" width="1" height="4"/><rect x="846" y="593" width="2" height="1"/><rect x="846" y="595" width="2" height="1"/><rect x="846" y="597" width="2" height="1"/><rect x="849" y="592" width="1" height="6"/><rect x="848" y="594" width="4" height="1"/><rect x="848" y="595" width="4" height="1"/><rect x="848" y="595" width="4" height="1"/><rect x="851" y="594" width="1" height="2"/></g>
<g fill="#f08cb4" opacity="1.0"><rect x="846" y="600" width="1" height="6"/><rect x="845" y="602" width="3" height="1"/><rect x="845" y="605" width="2" height="1"/><rect x="848" y="601" width="4" height="1"/><rect x="848" y="603" width="4" height="1"/><rect x="848" y="605" width="4" height="1"/><rect x="851" y="601" width="1" height="5"/><rect x="848" y="601" width="1" height="5"/></g>
<g fill="#f08cb4" opacity="1.0"><rect x="846" y="608" width="1" height="7"/><rect x="845" y="610" width="3" height="1"/><rect x="845" y="613" width="2" height="1"/><rect x="848" y="609" width="4" height="1"/><rect x="848" y="611" width="4" height="1"/><rect x="848" y="614" width="4" height="1"/><rect x="851" y="609" width="1" height="6"/><rect x="848" y="609" width="1" height="6"/></g>
<g transform="translate(862.00,593.00) scale(0.722,1.000)" fill="#f08cb4"><rect x="1" y="0" width="1" height="1"/><rect x="0" y="1" width="2" height="1"/><rect x="1" y="2" width="1" height="1"/><rect x="1" y="3" width="1" height="1"/><rect x="0" y="4" width="3" height="1"/><rect x="4" y="1" width="1" height="1"/><rect x="4" y="3" width="1" height="1"/><rect x="7" y="0" width="1" height="1"/><rect x="6" y="1" width="2" height="1"/><rect x="7" y="2" width="1" height="1"/><rect x="7" y="3" width="1" height="1"/><rect x="6" y="4" width="3" height="1"/></g>
<g transform="translate(864.00,601.00) scale(0.667,1.000)" fill="#f08cb4"><rect x="1" y="0" width="1" height="1"/><rect x="0" y="1" width="2" height="1"/><rect x="1" y="2" width="1" height="1"/><rect x="1" y="3" width="1" height="1"/><rect x="0" y="4" width="3" height="1"/></g>
<rect x="856" y="610" width="17.5" height="2.5" fill="#f08cb4"/>
<g fill="#f08cb4" opacity="1.0"><rect x="877" y="593" width="7" height="1"/><rect x="878" y="595" width="6" height="1"/><rect x="877" y="597" width="7" height="1"/><rect x="878" y="596" width="5" height="1"/><rect x="879" y="593" width="1" height="5"/><rect x="883" y="595" width="1" height="3"/><rect x="877" y="597" width="2" height="1"/><rect x="880" y="594" width="2" height="2"/></g>
<g fill="#f08cb4" opacity="1.0"><rect x="892" y="593" width="5" height="1"/><rect x="893" y="595" width="4" height="1"/><rect x="892" y="597" width="5" height="1"/><rect x="893" y="596" width="3" height="1"/><rect x="894" y="593" width="1" height="5"/><rect x="896" y="595" width="1" height="3"/><rect x="892" y="597" width="2" height="1"/><rect x="895" y="594" width="2" height="2"/></g>
<g fill="#f08cb4" opacity="1.0"><rect x="897" y="593" width="5" height="1"/><rect x="898" y="595" width="4" height="1"/><rect x="897" y="597" width="5" height="1"/><rect x="898" y="596" width="3" height="1"/><rect x="899" y="593" width="1" height="5"/><rect x="901" y="595" width="1" height="3"/><rect x="897" y="597" width="2" height="1"/><rect x="900" y="594" width="2" height="2"/></g>
<g fill="#f08cb4" opacity="1.0"><rect x="860" y="622" width="1" height="2"/><rect x="861" y="622" width="2" height="1"/><rect x="861" y="623" width="2" height="1"/><rect x="861" y="624" width="2" height="1"/><rect x="864" y="621" width="1" height="4"/><rect x="863" y="623" width="2" height="1"/><rect x="863" y="622" width="2" height="1"/><rect x="863" y="623" width="2" height="1"/></g>
<g fill="#f08cb4" opacity="1.0"><rect x="866" y="622" width="1" height="2"/><rect x="867" y="622" width="2" height="1"/><rect x="867" y="623" width="2" height="1"/><rect x="867" y="624" width="2" height="1"/><rect x="870" y="621" width="1" height="4"/><rect x="869" y="623" width="2" height="1"/><rect x="869" y="622" width="2" height="1"/><rect x="869" y="623" width="2" height="1"/></g>
<g fill="#f08cb4" opacity="1.0"><rect x="874" y="621" width="1" height="4"/><rect x="873" y="623" width="3" height="1"/><rect x="873" y="626" width="2" height="1"/><rect x="876" y="622" width="2" height="1"/><rect x="876" y="623" width="2" height="1"/><rect x="876" y="624" width="2" height="1"/><rect x="877" y="622" width="1" height="3"/><rect x="876" y="622" width="1" height="3"/></g>
<g fill="#f08cb4" opacity="1.0"><rect x="880" y="621" width="1" height="4"/><rect x="879" y="623" width="3" height="1"/><rect x="879" y="626" width="2" height="1"/><rect x="882" y="622" width="2" height="1"/><rect x="882" y="623" width="2" height="1"/><rect x="882" y="624" width="2" height="1"/><rect x="883" y="622" width="1" height="3"/><rect x="882" y="622" width="1" height="3"/></g>
<g fill="#f08cb4" opacity="1.0"><rect x="885" y="621" width="5" height="1"/><rect x="886" y="623" width="4" height="1"/><rect x="885" y="625" width="5" height="1"/><rect x="886" y="623" width="3" height="1"/><rect x="887" y="621" width="1" height="4"/><rect x="889" y="623" width="1" height="2"/><rect x="885" y="624" width="2" height="1"/><rect x="888" y="621" width="2" height="2"/></g>
<g fill="#f08cb4" opacity="1.0"><rect x="892" y="622" width="1" height="2"/><rect x="893" y="622" width="2" height="1"/><rect x="893" y="623" width="2" height="1"/><rect x="893" y="624" width="2" height="1"/><rect x="896" y="621" width="1" height="4"/><rect x="895" y="623" width="2" height="1"/><rect x="895" y="622" width="2" height="1"/><rect x="895" y="623" width="2" height="1"/></g>
<rect x="0" y="0" width="914" height="5" fill="#f2f2f0"/>
<rect x="665" y="0" width="249" height="5" fill="#fcfcfc"/>
<rect x="637" y="0" width="28" height="5" fill="#ececec"/>
<rect x="0" y="5" width="914" height="1" fill="#a4a4a4"/>
<rect x="0" y="6" width="914" height="1" fill="#ececec"/>
<rect x="0" y="7" width="914" height="1" fill="#b0b0b0"/>
<rect x="0" y="8" width="914" height="1" fill="#606060"/>
<rect x="57" y="0" width="1" height="4" fill="#707070"/>
<rect x="155" y="0" width="1" height="4" fill="#707070"/>
<rect x="276" y="0" width="1" height="4" fill="#707070"/>
<rect x="354" y="0" width="1" height="4" fill="#707070"/>
<rect x="452" y="0" width="1" height="4" fill="#707070"/>
<rect x="596" y="0" width="1" height="4" fill="#707070"/>
<rect x="626" y="0" width="1" height="4" fill="#707070"/>
<rect x="0" y="0" width="6" height="1.5" fill="#4060a0"/>
<rect x="15" y="0" width="3" height="2" fill="#b0a070"/>
<rect x="24" y="0" width="3" height="2" fill="#404060"/>
<rect x="37" y="0" width="13" height="1.5" fill="#303040"/>
<rect x="74" y="0" width="2" height="1.5" fill="#404040"/>
<rect x="91" y="0" width="3" height="2" fill="#e09030"/>
<rect x="114" y="0" width="6" height="1.5" fill="#304070"/>
<rect x="139" y="0" width="2" height="1.5" fill="#808080"/>
<rect x="187" y="0" width="14" height="1.5" fill="#3060a0"/>
<rect x="213" y="0" width="3" height="2" fill="#e0a030"/>
<rect x="254" y="0" width="9" height="2" fill="#2050a0"/>
<rect x="288" y="0" width="2" height="1.5" fill="#303030"/>
<rect x="329" y="0" width="2" height="1.5" fill="#909090"/>
<rect x="371" y="0" width="6" height="2" fill="#2060a0"/>
<rect x="398" y="0" width="2" height="1.5" fill="#808080"/>
<rect x="420" y="0" width="3" height="2" fill="#101010"/>
<rect x="444" y="0" width="2" height="1.5" fill="#808080"/>
<rect x="462" y="0" width="2" height="1.5" fill="#404040"/>
<rect x="473" y="0" width="2" height="1.5" fill="#404040"/>
<rect x="482" y="1" width="16" height="1" fill="#3050a0"/>
<rect x="482" y="0" width="1" height="2" fill="#3050a0"/>
<rect x="497" y="0" width="1" height="2" fill="#3050a0"/>
<rect x="505" y="1" width="8" height="1" fill="#3050a0"/>
<rect x="505" y="0" width="1" height="2" fill="#3050a0"/>
<rect x="512" y="0" width="1" height="2" fill="#3050a0"/>
<rect x="518" y="0" width="2" height="1.5" fill="#203060"/>
<rect x="535" y="0" width="9" height="2" fill="#5090b0"/>
<rect x="552" y="1" width="15" height="1" fill="#909090"/>
<rect x="552" y="0" width="1" height="2" fill="#909090"/>
<rect x="566" y="0" width="1" height="2" fill="#909090"/>
<rect x="575" y="0" width="13" height="2" fill="#101010"/>
<rect x="604" y="0" width="13" height="1.5" fill="#203870"/>
<rect x="653" y="0" width="2" height="1.5" fill="#303030"/>
<rect x="631" y="3" width="2" height="2" fill="#909090"/>
<rect x="634" y="3" width="3" height="2" fill="#909090"/>
</svg>
</body></html>
